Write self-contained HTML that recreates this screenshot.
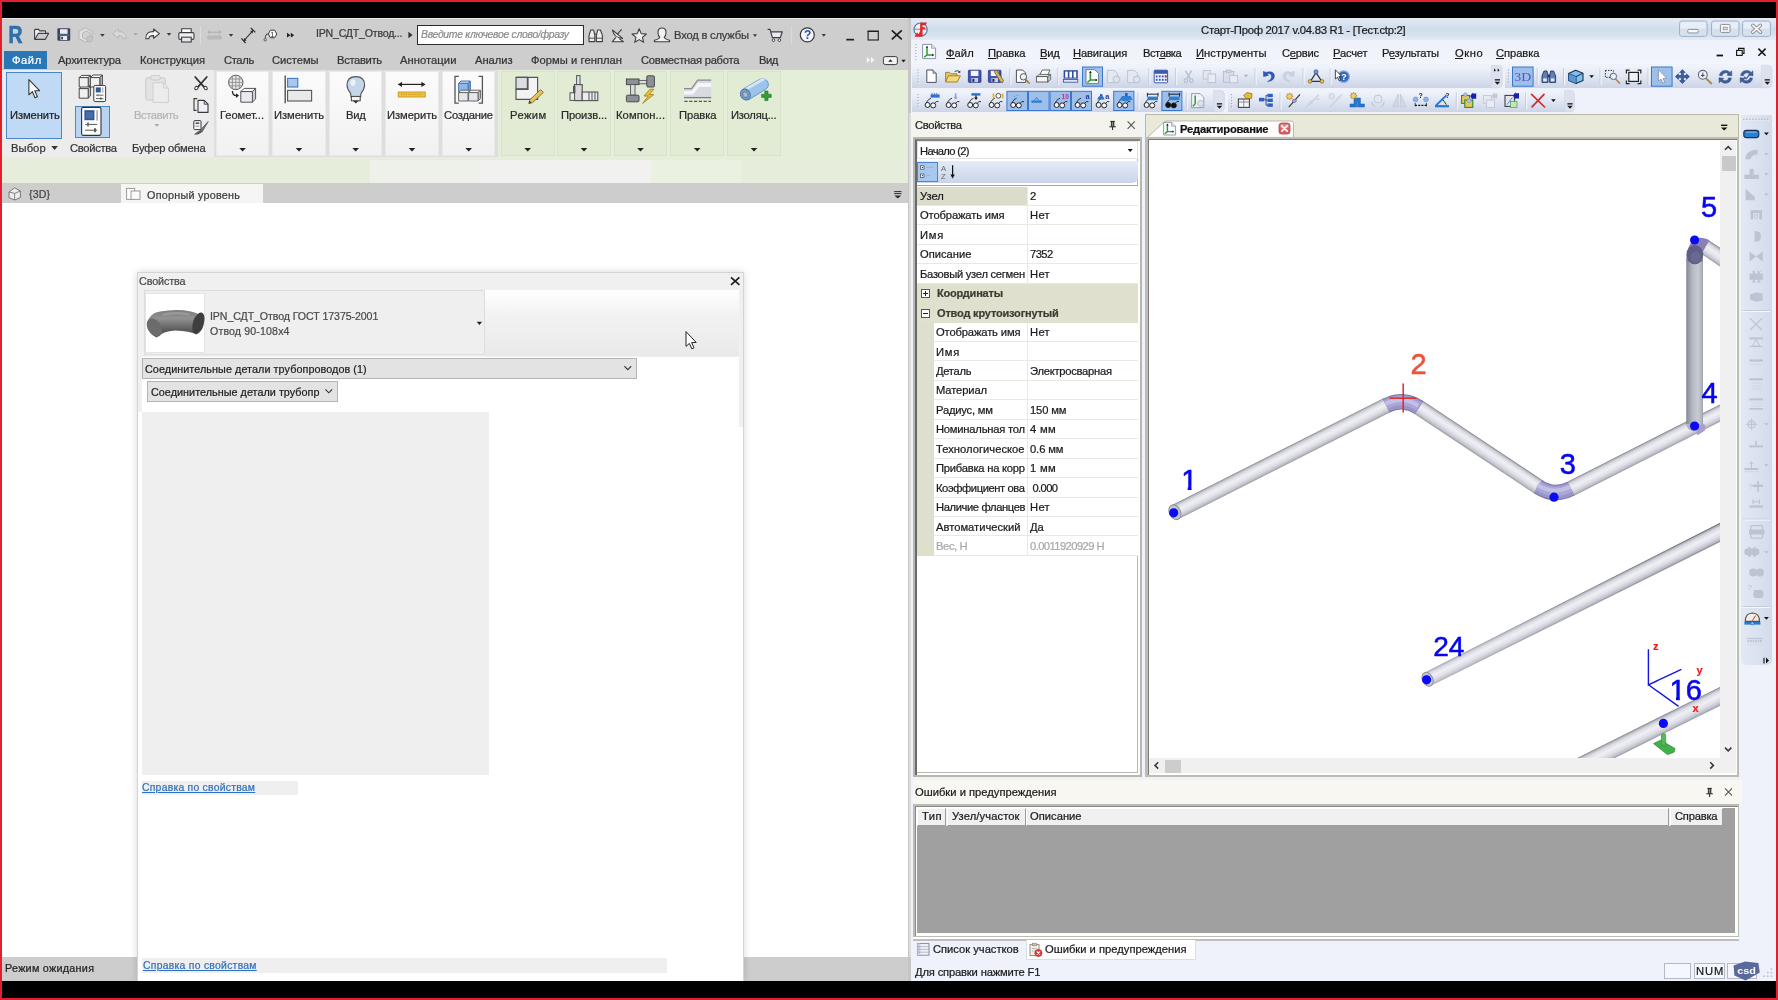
<!DOCTYPE html>
<html lang="ru"><head><meta charset="utf-8"><title>Revit / Старт-Проф</title>
<style>
html,body{margin:0;padding:0;background:#000;}
body{width:1778px;height:1000px;position:relative;overflow:hidden;font-family:"Liberation Sans", sans-serif;}
#root{position:absolute;left:0;top:0;width:1778px;height:1000px;overflow:hidden;background:#000;}
#root div,#root svg,#root span.t{position:absolute;box-sizing:border-box;}
span.t{white-space:pre;font-family:"Liberation Sans", sans-serif;-webkit-text-stroke:0.22px currentColor;will-change:transform;}
u{text-decoration:underline;text-underline-offset:1px;}
#root svg{will-change:transform;}
</style></head><body><div id="root">
<div style="left:0px;top:0px;width:1778px;height:1000px;background:#e0202f;"></div>
<div style="left:2px;top:2px;width:1774px;height:996px;background:#000;"></div>
<div style="left:2px;top:18px;width:908px;height:963px;background:#ffffff;"></div>
<div style="left:2px;top:18px;width:908px;height:52px;background:#cecece;"></div>
<div style="left:2px;top:18px;width:908px;height:1px;background:#e6e6e6;"></div>
<div style="left:2px;top:70px;width:908px;height:87px;background:#e5eed9;"></div>
<div style="left:2px;top:70px;width:212px;height:87px;background:#ececec;"></div>
<div style="left:214px;top:70px;width:284px;height:87px;background:#dedede;"></div>
<div style="left:2px;top:157px;width:908px;height:26px;background:#e6eedb;"></div>
<div style="left:370px;top:160px;width:110px;height:23px;background:#eef1ea;"></div>
<div style="left:480px;top:160px;width:171px;height:23px;background:#f1f2f0;"></div>
<div style="left:651px;top:160px;width:90px;height:23px;background:#eaf1e1;"></div>
<div style="left:2px;top:183px;width:908px;height:20px;background:#cdcdcd;"></div>
<div style="left:121px;top:184px;width:142px;height:19px;background:#f5f5f5;"></div>
<div style="left:2px;top:957px;width:908px;height:24px;background:#cdcdcd;"></div>
<div style="left:908px;top:18px;width:3px;height:963px;background:#c6c6c6;"></div>
<div style="left:909px;top:113px;width:1.5px;height:844px;background:#dcdcde;"></div>
<div style="left:910.5px;top:113px;width:2.5px;height:844px;background:#b8bac4;"></div>
<div style="left:4px;top:51px;width:43px;height:18px;background:#2a77b7;"></div>
<span class="t" style="left:11.8px;top:53.9px;font-size:11.2px;line-height:12.51px;letter-spacing:0.572px;color:#ffffff;">Файл</span>
<span class="t" style="left:57.8px;top:53.9px;font-size:11.2px;line-height:12.51px;letter-spacing:-0.181px;color:#333;">Архитектура</span>
<span class="t" style="left:139.8px;top:53.9px;font-size:11.2px;line-height:12.51px;letter-spacing:0.006px;color:#333;">Конструкция</span>
<span class="t" style="left:223.8px;top:53.9px;font-size:11.2px;line-height:12.51px;letter-spacing:-0.356px;color:#333;">Сталь</span>
<span class="t" style="left:271.8px;top:53.9px;font-size:11.2px;line-height:12.51px;letter-spacing:-0.052px;color:#333;">Системы</span>
<span class="t" style="left:336.8px;top:53.9px;font-size:11.2px;line-height:12.51px;letter-spacing:-0.323px;color:#333;">Вставить</span>
<span class="t" style="left:399.8px;top:53.9px;font-size:11.2px;line-height:12.51px;letter-spacing:0.060px;color:#333;">Аннотации</span>
<span class="t" style="left:474.8px;top:53.9px;font-size:11.2px;line-height:12.51px;letter-spacing:-0.044px;color:#333;">Анализ</span>
<span class="t" style="left:530.8px;top:53.9px;font-size:11.2px;line-height:12.51px;letter-spacing:0.045px;color:#333;">Формы и генплан</span>
<span class="t" style="left:640.8px;top:53.9px;font-size:11.2px;line-height:12.51px;letter-spacing:-0.242px;color:#333;">Совместная работа</span>
<span class="t" style="left:758.6px;top:53.9px;font-size:11.2px;line-height:12.51px;letter-spacing:-0.509px;color:#333;">Вид</span>
<span class="t" style="left:315.8px;top:28.2px;font-size:10.6px;line-height:11.84px;letter-spacing:-0.219px;color:#3a3a3a;">IPN_СДТ_Отвод...</span>
<div style="left:417px;top:25px;width:167px;height:20px;background:#ffffff;border:1.5px solid #2b2b2b;"></div>
<span class="t" style="left:420.8px;top:29.3px;font-size:10.4px;line-height:11.62px;letter-spacing:-0.294px;color:#8c8c8c;font-style:italic;">Введите ключевое слово/фразу</span>
<span class="t" style="left:673.8px;top:28.9px;font-size:11.2px;line-height:12.51px;letter-spacing:-0.198px;color:#3c3c3c;">Вход в службы</span>
<div style="left:6px;top:72px;width:56px;height:67px;background:#c0daf5;border:1px solid #4a86c8;"></div>
<span class="t" style="left:9.5px;top:108.9px;font-size:11.2px;line-height:12.51px;letter-spacing:-0.101px;color:#222;">Изменить</span>
<span class="t" style="left:11.4px;top:141.9px;font-size:11.2px;line-height:12.51px;letter-spacing:0.068px;color:#333;">Выбор</span>
<div style="left:75px;top:106px;width:35px;height:32px;background:#b9d4f2;border:1px solid #4a86c8;"></div>
<span class="t" style="left:69.7px;top:141.9px;font-size:11.2px;line-height:12.51px;letter-spacing:-0.297px;color:#333;">Свойства</span>
<span class="t" style="left:134.3px;top:108.9px;font-size:11.2px;line-height:12.51px;letter-spacing:-0.409px;color:#b4b4b4;">Вставить</span>
<span class="t" style="left:131.5px;top:141.9px;font-size:11.2px;line-height:12.51px;letter-spacing:-0.212px;color:#333;">Буфер обмена</span>
<div style="left:215.7px;top:71px;width:53.30000000000001px;height:85px;background:linear-gradient(#fbfbfb,#f1f1f1);border:1px solid #e9e9e9;"></div>
<div style="left:272px;top:71px;width:54.10000000000002px;height:85px;background:linear-gradient(#fbfbfb,#f1f1f1);border:1px solid #e9e9e9;"></div>
<div style="left:328.7px;top:71px;width:53.69999999999999px;height:85px;background:linear-gradient(#fbfbfb,#f1f1f1);border:1px solid #e9e9e9;"></div>
<div style="left:385px;top:71px;width:54.19999999999999px;height:85px;background:linear-gradient(#fbfbfb,#f1f1f1);border:1px solid #e9e9e9;"></div>
<div style="left:442px;top:71px;width:53.39999999999998px;height:85px;background:linear-gradient(#fbfbfb,#f1f1f1);border:1px solid #e9e9e9;"></div>
<div style="left:500.7px;top:71px;width:54.00000000000006px;height:85px;background:#e2ecd4;border:1px solid #d9e3cc;"></div>
<div style="left:557.4px;top:71px;width:53.200000000000045px;height:85px;background:#e2ecd4;border:1px solid #d9e3cc;"></div>
<div style="left:613.6px;top:71px;width:53.69999999999993px;height:85px;background:#e2ecd4;border:1px solid #d9e3cc;"></div>
<div style="left:670.3px;top:71px;width:53.700000000000045px;height:85px;background:#e2ecd4;border:1px solid #d9e3cc;"></div>
<div style="left:726.7px;top:71px;width:54.799999999999955px;height:85px;background:#e2ecd4;border:1px solid #d9e3cc;"></div>
<span class="t" style="left:220.3px;top:108.9px;font-size:11.2px;line-height:12.51px;letter-spacing:-0.064px;color:#2a2a2a;">Геомет...</span>
<span class="t" style="left:274.3px;top:108.9px;font-size:11.2px;line-height:12.51px;letter-spacing:-0.058px;color:#2a2a2a;">Изменить</span>
<span class="t" style="left:346.3px;top:108.9px;font-size:11.2px;line-height:12.51px;letter-spacing:-0.259px;color:#2a2a2a;">Вид</span>
<span class="t" style="left:387.3px;top:108.9px;font-size:11.2px;line-height:12.51px;letter-spacing:-0.065px;color:#2a2a2a;">Измерить</span>
<span class="t" style="left:444.3px;top:108.9px;font-size:11.2px;line-height:12.51px;letter-spacing:-0.201px;color:#2a2a2a;">Создание</span>
<span class="t" style="left:510.3px;top:108.9px;font-size:11.2px;line-height:12.51px;letter-spacing:0.433px;color:#2a2a2a;">Режим</span>
<span class="t" style="left:561.3px;top:108.9px;font-size:11.2px;line-height:12.51px;letter-spacing:-0.143px;color:#2a2a2a;">Произв...</span>
<span class="t" style="left:615.8px;top:108.9px;font-size:11.2px;line-height:12.51px;letter-spacing:0.098px;color:#2a2a2a;">Компон...</span>
<span class="t" style="left:678.8px;top:108.9px;font-size:11.2px;line-height:12.51px;letter-spacing:-0.047px;color:#2a2a2a;">Правка</span>
<span class="t" style="left:730.8px;top:108.9px;font-size:11.2px;line-height:12.51px;letter-spacing:-0.230px;color:#2a2a2a;">Изоляц...</span>
<span class="t" style="left:29.3px;top:188.7px;font-size:10.6px;line-height:11.84px;letter-spacing:0.180px;color:#444;">{3D}</span>
<span class="t" style="left:147.4px;top:188.6px;font-size:10.8px;line-height:12.06px;letter-spacing:0.235px;color:#3a3a3a;">Опорный уровень</span>
<span class="t" style="left:4.8px;top:961.6px;font-size:10.8px;line-height:12.06px;letter-spacing:0.263px;color:#222;">Режим ожидания</span>
<div style="left:134px;top:270px;width:613px;height:714px;background:radial-gradient(closest-side,rgba(0,0,0,0.10),rgba(0,0,0,0));"></div>
<div style="left:137px;top:272px;width:607px;height:709px;background:#ffffff;border:1px solid #d4d4d4;border-bottom:none;box-shadow:0 0 7px rgba(0,0,0,0.16);"></div>
<div style="left:138px;top:273px;width:605px;height:84px;background:#f0f0f0;"></div>
<div style="left:138px;top:357px;width:4px;height:55px;background:#f0f0f0;"></div>
<div style="left:739px;top:357px;width:4px;height:70px;background:#f0f0f0;"></div>
<div style="left:143.5px;top:290px;width:341.5px;height:65px;background:#efefef;border:1px solid #dddddd;"></div>
<div style="left:145px;top:293px;width:60px;height:60px;background:#ffffff;border:1px solid #e4e4e4;"></div>
<div style="left:485px;top:290px;width:254px;height:66px;background:linear-gradient(#ffffff,#f2f2f2 40%,#e9e9e9);"></div>
<span class="t" style="left:138.8px;top:275.1px;font-size:10.8px;line-height:12.06px;letter-spacing:-0.126px;color:#4a4a4a;">Свойства</span>
<span class="t" style="left:209.5px;top:310.7px;font-size:10.6px;line-height:11.84px;letter-spacing:-0.080px;color:#4a4a4a;">IPN_СДТ_Отвод ГОСТ 17375-2001</span>
<span class="t" style="left:209.5px;top:325.5px;font-size:10.6px;line-height:11.84px;letter-spacing:0.149px;color:#4a4a4a;">Отвод 90-108x4</span>
<div style="left:142px;top:357.5px;width:494.5px;height:21px;background:#e3e3e3;border:1px solid #b4b4b4;"></div>
<span class="t" style="left:145.4px;top:362.7px;font-size:10.8px;line-height:12.06px;letter-spacing:0.067px;color:#222;">Соединительные детали трубопроводов (1)</span>
<div style="left:147.3px;top:381px;width:190.5px;height:20.5px;background:#e3e3e3;border:1px solid #b4b4b4;"></div>
<span class="t" style="left:150.8px;top:385.6px;font-size:10.8px;line-height:12.06px;letter-spacing:0.035px;color:#222;">Соединительные детали трубопр</span>
<div style="left:142px;top:412px;width:347px;height:363px;background:#efefef;"></div>
<div style="left:142px;top:781px;width:156px;height:14px;background:#efefef;"></div>
<span class="t" style="left:141.8px;top:782.3px;font-size:10.4px;line-height:11.62px;letter-spacing:0.242px;color:#2f6fbf;text-decoration:underline;">Справка по свойствам</span>
<div style="left:142px;top:958px;width:525px;height:15px;background:#efefef;"></div>
<span class="t" style="left:143.3px;top:960.3px;font-size:10.4px;line-height:11.62px;letter-spacing:0.268px;color:#2f6fbf;text-decoration:underline;">Справка по свойствам</span>
<div style="left:911px;top:18px;width:865px;height:963px;background:#eff2fb;"></div>
<div style="left:911px;top:18px;width:865px;height:22px;background:linear-gradient(#e3eaf4,#d1ddeb 50%,#d6e1ee 75%,#e4ebf5);"></div>
<span class="t" style="left:1200.6px;top:24.0px;font-size:11.3px;line-height:12.62px;letter-spacing:-0.275px;color:#1a1a1a;">Старт-Проф 2017 v.04.83 R1 - [Тест.ctp:2]</span>
<div style="left:911px;top:40px;width:865px;height:24px;background:linear-gradient(#eef1fa,#f3f5fc);"></div>
<span class="t" style="left:946.3px;top:46.7px;font-size:11.2px;line-height:12.51px;letter-spacing:0.072px;color:#1a1a1a;">Файл</span><div style="left:946.3px;top:58.2px;width:8.5px;height:1px;background:#1a1a1a;"></div>
<span class="t" style="left:987.8px;top:46.7px;font-size:11.2px;line-height:12.51px;letter-spacing:-0.047px;color:#1a1a1a;">Правка</span><div style="left:987.8px;top:58.2px;width:8.0px;height:1px;background:#1a1a1a;"></div>
<span class="t" style="left:1039.8px;top:46.7px;font-size:11.2px;line-height:12.51px;letter-spacing:-0.259px;color:#1a1a1a;">Вид</span><div style="left:1039.8px;top:58.2px;width:7.5px;height:1px;background:#1a1a1a;"></div>
<span class="t" style="left:1073.3px;top:46.7px;font-size:11.2px;line-height:12.51px;letter-spacing:-0.133px;color:#1a1a1a;">Навигация</span><div style="left:1073.3px;top:58.2px;width:8.1px;height:1px;background:#1a1a1a;"></div>
<span class="t" style="left:1142.6px;top:46.7px;font-size:11.2px;line-height:12.51px;letter-spacing:-0.472px;color:#1a1a1a;">Вставка</span><div style="left:1159.3px;top:58.2px;width:6.1px;height:1px;background:#1a1a1a;"></div>
<span class="t" style="left:1195.8px;top:46.7px;font-size:11.2px;line-height:12.51px;letter-spacing:0.073px;color:#1a1a1a;">Инструменты</span><div style="left:1195.8px;top:58.2px;width:8.0px;height:1px;background:#1a1a1a;"></div>
<span class="t" style="left:1281.8px;top:46.7px;font-size:11.2px;line-height:12.51px;letter-spacing:-0.250px;color:#1a1a1a;">Сервис</span><div style="left:1289.6px;top:58.2px;width:6.2px;height:1px;background:#1a1a1a;"></div>
<span class="t" style="left:1333.3px;top:46.7px;font-size:11.2px;line-height:12.51px;letter-spacing:-0.207px;color:#1a1a1a;">Расчет</span><div style="left:1333.3px;top:58.2px;width:7.5px;height:1px;background:#1a1a1a;"></div>
<span class="t" style="left:1382.4px;top:46.7px;font-size:11.2px;line-height:12.51px;letter-spacing:-0.202px;color:#1a1a1a;">Результаты</span><div style="left:1389.6px;top:58.2px;width:5.7px;height:1px;background:#1a1a1a;"></div>
<span class="t" style="left:1454.6px;top:46.7px;font-size:11.2px;line-height:12.51px;letter-spacing:0.577px;color:#1a1a1a;">Окно</span><div style="left:1454.6px;top:58.2px;width:8.7px;height:1px;background:#1a1a1a;"></div>
<span class="t" style="left:1495.8px;top:46.7px;font-size:11.2px;line-height:12.51px;letter-spacing:-0.055px;color:#1a1a1a;">Справка</span><div style="left:1495.8px;top:58.2px;width:8.1px;height:1px;background:#1a1a1a;"></div>
<div style="left:912px;top:65px;width:589px;height:23px;background:linear-gradient(#f1f4fb,#e2e8f4 45%,#ccd4e6);border-radius:0 6px 6px 0;"></div>
<div style="left:1505px;top:65px;width:267px;height:23px;background:linear-gradient(#f1f4fb,#e2e8f4 45%,#ccd4e6);border-radius:0 6px 6px 0;"></div>
<div style="left:912px;top:90px;width:310px;height:22px;background:linear-gradient(#f1f4fb,#e2e8f4 45%,#ccd4e6);border-radius:0 6px 6px 0;"></div>
<div style="left:1228px;top:90px;width:346px;height:22px;background:linear-gradient(#f1f4fb,#e2e8f4 45%,#ccd4e6);border-radius:0 6px 6px 0;"></div>
<div style="left:911px;top:113px;width:231px;height:25px;background:#f4f3ee;"></div>
<span class="t" style="left:915.4px;top:118.8px;font-size:11.2px;line-height:12.51px;letter-spacing:-0.312px;color:#1e1e1e;">Свойства</span>
<div style="left:913px;top:137px;width:229px;height:640px;background:#b7b8ac;"></div>
<div style="left:915.2px;top:139px;width:225px;height:636px;background:#fdfdf9;border-left:2.2px solid #6a6a6a;border-top:2px solid #838380;"></div>
<div style="left:917.4px;top:141px;width:220.9px;height:632.2px;background:#ffffff;border-right:1.3px solid #b8b8b8;border-bottom:1.2px solid #b8b8b8;"></div>
<div style="left:917px;top:184.6px;width:221px;height:1.4px;background:#a6a69e;"></div>
<div style="left:917px;top:141px;width:221px;height:18px;background:#ffffff;border:1px solid #e2e2e2;"></div>
<span class="t" style="left:920.3px;top:144.6px;font-size:11.2px;line-height:12.51px;letter-spacing:-0.700px;color:#1a1a1a;">Начало (2)</span>
<div style="left:917px;top:161px;width:221px;height:22px;background:linear-gradient(#e4ebf7,#c9d5ea);border-radius:0 0 6px 0;"></div>
<div style="left:917px;top:162px;width:21px;height:20px;background:#a9c8ee;border:1px solid #4a86d4;"></div>
<div style="left:917px;top:186px;width:221px;height:370px;background:#ffffff;"></div>
<div style="left:917px;top:186.5px;width:110px;height:19.444px;background:#dcdcca;"></div>
<span class="t" style="left:919.7px;top:190.0px;font-size:11.2px;line-height:12.51px;letter-spacing:-0.014px;color:#1a1a1a;max-width:106px;overflow:hidden;">Узел</span>
<span class="t" style="left:1029.8px;top:190.0px;font-size:11.2px;line-height:12.51px;letter-spacing:0.000px;color:#1a1a1a;">2</span>
<div style="left:917px;top:204.944px;width:221px;height:1px;background:#e9e9e2;"></div>
<div style="left:1027px;top:186.5px;width:1px;height:19.444px;background:#e9e9e2;"></div>
<span class="t" style="left:919.7px;top:209.4px;font-size:11.2px;line-height:12.51px;letter-spacing:-0.131px;color:#1a1a1a;max-width:106px;overflow:hidden;">Отображать имя</span>
<span class="t" style="left:1029.8px;top:209.4px;font-size:11.2px;line-height:12.51px;letter-spacing:0.335px;color:#1a1a1a;">Нет</span>
<div style="left:917px;top:224.38799999999998px;width:221px;height:1px;background:#e9e9e2;"></div>
<div style="left:1027px;top:205.944px;width:1px;height:19.444px;background:#e9e9e2;"></div>
<span class="t" style="left:919.7px;top:228.9px;font-size:11.2px;line-height:12.51px;letter-spacing:0.768px;color:#1a1a1a;max-width:106px;overflow:hidden;">Имя</span>
<div style="left:917px;top:243.832px;width:221px;height:1px;background:#e9e9e2;"></div>
<div style="left:1027px;top:225.388px;width:1px;height:19.444px;background:#e9e9e2;"></div>
<span class="t" style="left:919.7px;top:248.3px;font-size:11.2px;line-height:12.51px;letter-spacing:-0.018px;color:#1a1a1a;max-width:106px;overflow:hidden;">Описание</span>
<span class="t" style="left:1029.8px;top:248.3px;font-size:11.2px;line-height:12.51px;letter-spacing:-0.553px;color:#1a1a1a;">7352</span>
<div style="left:917px;top:263.276px;width:221px;height:1px;background:#e9e9e2;"></div>
<div style="left:1027px;top:244.832px;width:1px;height:19.444px;background:#e9e9e2;"></div>
<span class="t" style="left:919.7px;top:267.7px;font-size:11.2px;line-height:12.51px;letter-spacing:-0.277px;color:#1a1a1a;max-width:106px;overflow:hidden;">Базовый узел сегмен</span>
<span class="t" style="left:1029.8px;top:267.7px;font-size:11.2px;line-height:12.51px;letter-spacing:0.335px;color:#1a1a1a;">Нет</span>
<div style="left:917px;top:282.72px;width:221px;height:1px;background:#e9e9e2;"></div>
<div style="left:1027px;top:264.276px;width:1px;height:19.444px;background:#e9e9e2;"></div>
<div style="left:917px;top:283.72px;width:221px;height:19.444px;background:#e0e0cf;"></div>
<span class="t" style="left:936.5px;top:287.3px;font-size:11.0px;line-height:12.29px;letter-spacing:-0.199px;color:#3c3c32;font-weight:700;">Координаты</span>
<div style="left:921px;top:289.22px;width:9px;height:9px;background:#ffffff;border:1px solid #555;"></div>
<div style="left:923px;top:293.22px;width:5px;height:1px;background:#222;"></div>
<div style="left:925px;top:291.22px;width:1px;height:5px;background:#222;"></div>
<div style="left:917px;top:303.164px;width:221px;height:19.444px;background:#e0e0cf;"></div>
<span class="t" style="left:936.5px;top:306.7px;font-size:11.0px;line-height:12.29px;letter-spacing:-0.177px;color:#3c3c32;font-weight:700;">Отвод крутоизогнутый</span>
<div style="left:921px;top:308.664px;width:9px;height:9px;background:#ffffff;border:1px solid #555;"></div>
<div style="left:923px;top:312.664px;width:5px;height:1px;background:#222;"></div>
<div style="left:917px;top:322.608px;width:17px;height:19.444px;background:#dfdfce;"></div>
<span class="t" style="left:936.3px;top:326.1px;font-size:11.2px;line-height:12.51px;letter-spacing:-0.138px;color:#1a1a1a;max-width:89px;overflow:hidden;">Отображать имя</span>
<span class="t" style="left:1029.8px;top:326.1px;font-size:11.2px;line-height:12.51px;letter-spacing:0.335px;color:#1a1a1a;">Нет</span>
<div style="left:934px;top:341.052px;width:204px;height:1px;background:#e9e9e2;"></div>
<div style="left:1027px;top:322.608px;width:1px;height:19.444px;background:#e9e9e2;"></div>
<div style="left:917px;top:342.052px;width:17px;height:19.444px;background:#dfdfce;"></div>
<span class="t" style="left:936.3px;top:345.5px;font-size:11.2px;line-height:12.51px;letter-spacing:0.718px;color:#1a1a1a;max-width:89px;overflow:hidden;">Имя</span>
<div style="left:934px;top:360.49600000000004px;width:204px;height:1px;background:#e9e9e2;"></div>
<div style="left:1027px;top:342.052px;width:1px;height:19.444px;background:#e9e9e2;"></div>
<div style="left:917px;top:361.496px;width:17px;height:19.444px;background:#dfdfce;"></div>
<span class="t" style="left:936.3px;top:365.0px;font-size:11.2px;line-height:12.51px;letter-spacing:-0.291px;color:#1a1a1a;max-width:89px;overflow:hidden;">Деталь</span>
<span class="t" style="left:1029.8px;top:365.0px;font-size:11.2px;line-height:12.51px;letter-spacing:-0.256px;color:#1a1a1a;">Электросварная</span>
<div style="left:934px;top:379.94px;width:204px;height:1px;background:#e9e9e2;"></div>
<div style="left:1027px;top:361.496px;width:1px;height:19.444px;background:#e9e9e2;"></div>
<div style="left:917px;top:380.94px;width:17px;height:19.444px;background:#dfdfce;"></div>
<span class="t" style="left:936.3px;top:384.4px;font-size:11.2px;line-height:12.51px;letter-spacing:-0.116px;color:#1a1a1a;max-width:89px;overflow:hidden;">Материал</span>
<div style="left:934px;top:399.384px;width:204px;height:1px;background:#e9e9e2;"></div>
<div style="left:1027px;top:380.94px;width:1px;height:19.444px;background:#e9e9e2;"></div>
<div style="left:917px;top:400.384px;width:17px;height:19.444px;background:#dfdfce;"></div>
<span class="t" style="left:936.3px;top:403.9px;font-size:11.2px;line-height:12.51px;letter-spacing:-0.196px;color:#1a1a1a;max-width:89px;overflow:hidden;">Радиус, мм</span>
<span class="t" style="left:1029.8px;top:403.9px;font-size:11.2px;line-height:12.51px;letter-spacing:-0.122px;color:#1a1a1a;">150 мм</span>
<div style="left:934px;top:418.82800000000003px;width:204px;height:1px;background:#e9e9e2;"></div>
<div style="left:1027px;top:400.384px;width:1px;height:19.444px;background:#e9e9e2;"></div>
<div style="left:917px;top:419.828px;width:17px;height:19.444px;background:#dfdfce;"></div>
<span class="t" style="left:936.3px;top:423.3px;font-size:11.2px;line-height:12.51px;letter-spacing:-0.220px;color:#1a1a1a;max-width:89px;overflow:hidden;">Номинальная тол</span>
<span class="t" style="left:1029.8px;top:423.3px;font-size:11.2px;line-height:12.51px;letter-spacing:0.338px;color:#1a1a1a;">4 мм</span>
<div style="left:934px;top:438.272px;width:204px;height:1px;background:#e9e9e2;"></div>
<div style="left:1027px;top:419.828px;width:1px;height:19.444px;background:#e9e9e2;"></div>
<div style="left:917px;top:439.272px;width:17px;height:19.444px;background:#dfdfce;"></div>
<span class="t" style="left:936.3px;top:442.7px;font-size:11.2px;line-height:12.51px;letter-spacing:0.018px;color:#1a1a1a;max-width:89px;overflow:hidden;">Технологическое</span>
<span class="t" style="left:1029.8px;top:442.7px;font-size:11.2px;line-height:12.51px;letter-spacing:-0.097px;color:#1a1a1a;">0.6 мм</span>
<div style="left:934px;top:457.716px;width:204px;height:1px;background:#e9e9e2;"></div>
<div style="left:1027px;top:439.272px;width:1px;height:19.444px;background:#e9e9e2;"></div>
<div style="left:917px;top:458.716px;width:17px;height:19.444px;background:#dfdfce;"></div>
<span class="t" style="left:936.3px;top:462.2px;font-size:11.2px;line-height:12.51px;letter-spacing:-0.233px;color:#1a1a1a;max-width:89px;overflow:hidden;">Прибавка на корр</span>
<span class="t" style="left:1029.8px;top:462.2px;font-size:11.2px;line-height:12.51px;letter-spacing:0.338px;color:#1a1a1a;">1 мм</span>
<div style="left:934px;top:477.16px;width:204px;height:1px;background:#e9e9e2;"></div>
<div style="left:1027px;top:458.716px;width:1px;height:19.444px;background:#e9e9e2;"></div>
<div style="left:917px;top:478.15999999999997px;width:17px;height:19.444px;background:#dfdfce;"></div>
<span class="t" style="left:936.3px;top:481.6px;font-size:11.2px;line-height:12.51px;letter-spacing:-0.405px;color:#1a1a1a;max-width:89px;overflow:hidden;">Коэффициент ова</span>
<span class="t" style="left:1029.8px;top:481.6px;font-size:11.2px;line-height:12.51px;letter-spacing:-0.610px;color:#1a1a1a;"> 0.000</span>
<div style="left:934px;top:496.604px;width:204px;height:1px;background:#e9e9e2;"></div>
<div style="left:1027px;top:478.15999999999997px;width:1px;height:19.444px;background:#e9e9e2;"></div>
<div style="left:917px;top:497.604px;width:17px;height:19.444px;background:#dfdfce;"></div>
<span class="t" style="left:936.3px;top:501.1px;font-size:11.2px;line-height:12.51px;letter-spacing:-0.381px;color:#1a1a1a;max-width:89px;overflow:hidden;">Наличие фланцев</span>
<span class="t" style="left:1029.8px;top:501.1px;font-size:11.2px;line-height:12.51px;letter-spacing:0.335px;color:#1a1a1a;">Нет</span>
<div style="left:934px;top:516.048px;width:204px;height:1px;background:#e9e9e2;"></div>
<div style="left:1027px;top:497.604px;width:1px;height:19.444px;background:#e9e9e2;"></div>
<div style="left:917px;top:517.048px;width:17px;height:19.444px;background:#dfdfce;"></div>
<span class="t" style="left:936.3px;top:520.5px;font-size:11.2px;line-height:12.51px;letter-spacing:0.002px;color:#1a1a1a;max-width:89px;overflow:hidden;">Автоматический</span>
<span class="t" style="left:1029.8px;top:520.5px;font-size:11.2px;line-height:12.51px;letter-spacing:-0.081px;color:#1a1a1a;">Да</span>
<div style="left:934px;top:535.492px;width:204px;height:1px;background:#e9e9e2;"></div>
<div style="left:1027px;top:517.048px;width:1px;height:19.444px;background:#e9e9e2;"></div>
<div style="left:917px;top:536.492px;width:17px;height:19.444px;background:#dfdfce;"></div>
<span class="t" style="left:936.3px;top:540.0px;font-size:11.2px;line-height:12.51px;letter-spacing:-0.404px;color:#a8a8a8;max-width:89px;overflow:hidden;">Вес, Н</span>
<span class="t" style="left:1029.8px;top:540.0px;font-size:11.2px;line-height:12.51px;letter-spacing:-0.570px;color:#a8a8a8;">0.0011920929 Н</span>
<div style="left:934px;top:554.9359999999999px;width:204px;height:1px;background:#e9e9e2;"></div>
<div style="left:1027px;top:536.492px;width:1px;height:19.444px;background:#e9e9e2;"></div>
<div style="left:1145px;top:114px;width:594px;height:663px;background:#e9e9da;border:1px solid #b9b9a8;"></div>
<div style="left:1145px;top:137px;width:594px;height:640px;background:#bdbdb8;"></div>
<div style="left:1147.6px;top:139px;width:589.9px;height:636.2px;background:#fdfdf9;border-left:1.4px solid #7c7c78;border-top:1.6px solid #7c7c78;"></div>
<svg style="left:1146px;top:114px" width="160" height="26" viewBox="0 0 160 26"><path d="M1.5 23.4 L17.5 8.5 Q19 7 21 7 L145 7 Q147.5 7 147.5 9.5 L147.5 23.4 Z" fill="#ffffff" stroke="#b9b9a8" stroke-width="1"/></svg>
<span class="t" style="left:1179.6px;top:122.5px;font-size:11.2px;line-height:12.51px;letter-spacing:-0.198px;color:#111;font-weight:700;">Редактирование</span>
<div style="left:1149px;top:140.6px;width:587px;height:632.6px;background:#ffffff;"></div>
<div style="left:1720.4px;top:140.6px;width:15.6px;height:617.4px;background:#f0f0f0;"></div>
<div style="left:1722px;top:156px;width:14px;height:15px;background:#c9c9c9;"></div>
<div style="left:1149px;top:758px;width:571.4px;height:15.2px;background:#f0f0f0;"></div>
<div style="left:1164.5px;top:759.5px;width:16px;height:13px;background:#cdcdcd;"></div>
<div style="left:1720.4px;top:758px;width:15.6px;height:15.2px;background:#f0f0f0;"></div>
<div style="left:1741px;top:115px;width:31px;height:550px;background:linear-gradient(90deg,#e3e8f4,#d3dbeb);border-radius:0 0 5px 5px;"></div>
<div style="left:913px;top:780px;width:829px;height:24.5px;background:#f8f7f2;"></div>
<span class="t" style="left:914.7px;top:785.6px;font-size:11.2px;line-height:12.51px;letter-spacing:0.008px;color:#1a1a1a;">Ошибки и предупреждения</span>
<div style="left:912.8px;top:803.7px;width:826.2px;height:133.3px;background:#bcbdb2;"></div>
<div style="left:915px;top:806px;width:822.8px;height:129.6px;background:#fdfdf9;border-left:1.6px solid #8a8a86;border-top:1.6px solid #8a8a86;"></div>
<div style="left:916.6px;top:807.6px;width:818.6px;height:125.3px;background:#a0a0a0;"></div>
<div style="left:916.6px;top:807.6px;width:806.4px;height:18.6px;background:#f0f0f0;"></div>
<div style="left:916.6px;top:807.6px;width:29.399999999999977px;height:18.6px;background:#f0f0f0;border:1px solid #fff;border-right-color:#9c9c9c;border-bottom-color:#9c9c9c;"></div>
<div style="left:947px;top:807.6px;width:78.5px;height:18.6px;background:#f0f0f0;border:1px solid #fff;border-right-color:#9c9c9c;border-bottom-color:#9c9c9c;"></div>
<div style="left:1026px;top:807.6px;width:643.3px;height:18.6px;background:#f0f0f0;border:1px solid #fff;border-right-color:#9c9c9c;border-bottom-color:#9c9c9c;"></div>
<div style="left:1670px;top:807.6px;width:53px;height:18.6px;background:#f0f0f0;border:1px solid #fff;border-right-color:#9c9c9c;border-bottom-color:#9c9c9c;"></div>
<div style="left:913px;top:937px;width:826px;height:2.4px;background:#ffffff;"></div>
<div style="left:913px;top:939.4px;width:826px;height:1.6px;background:#bebebe;"></div>
<span class="t" style="left:921.6px;top:809.5px;font-size:11.2px;line-height:12.51px;letter-spacing:0.488px;color:#1a1a1a;">Тип</span>
<span class="t" style="left:951.8px;top:809.5px;font-size:11.2px;line-height:12.51px;letter-spacing:0.107px;color:#1a1a1a;">Узел/участок</span>
<span class="t" style="left:1029.8px;top:809.5px;font-size:11.2px;line-height:12.51px;letter-spacing:0.011px;color:#1a1a1a;">Описание</span>
<span class="t" style="left:1674.8px;top:809.5px;font-size:11.2px;line-height:12.51px;letter-spacing:-0.222px;color:#1a1a1a;">Справка</span>
<div style="left:1025.8px;top:940px;width:170px;height:19.5px;background:#ffffff;border:1px solid #d8dde8;border-top:none;"></div>
<span class="t" style="left:932.5px;top:943.3px;font-size:11.2px;line-height:12.51px;letter-spacing:-0.014px;color:#1a1a1a;">Список участков</span>
<span class="t" style="left:1044.7px;top:943.3px;font-size:11.2px;line-height:12.51px;letter-spacing:0.004px;color:#1a1a1a;">Ошибки и предупреждения</span>
<span class="t" style="left:914.8px;top:965.5px;font-size:11.2px;line-height:12.51px;letter-spacing:-0.161px;color:#1a1a1a;">Для справки нажмите F1</span>
<div style="left:1664px;top:963px;width:27px;height:16px;background:#f4f7fd;border:1px solid #b5b9c4;"></div>
<div style="left:1693.5px;top:963px;width:31px;height:16px;background:#f4f7fd;border:1px solid #b5b9c4;"></div>
<div style="left:1727px;top:963px;width:30px;height:16px;background:#f4f7fd;border:1px solid #b5b9c4;"></div>
<span class="t" style="left:1695.8px;top:965.4px;font-size:11.2px;line-height:12.51px;letter-spacing:0.874px;color:#1a1a1a;">NUM</span>
<svg style="left:1149px;top:140px" width="571" height="618" viewBox="1149 140 571 618"><defs><linearGradient id="pg0" gradientUnits="userSpaceOnUse" x1="1276.92" y1="452.04" x2="1283.91" y2="465.87"><stop offset="0" stop-color="#74747a"/><stop offset="0.07" stop-color="#b2b3bc"/><stop offset="0.2" stop-color="#d9dae2"/><stop offset="0.42" stop-color="#eff0f5"/><stop offset="0.64" stop-color="#e2e3ea"/><stop offset="0.85" stop-color="#c5c6d0"/><stop offset="0.95" stop-color="#abacb5"/><stop offset="1" stop-color="#8e8e95"/></linearGradient><linearGradient id="pg1" gradientUnits="userSpaceOnUse" x1="1482.89" y1="440.65" x2="1474.31" y2="453.55"><stop offset="0" stop-color="#74747a"/><stop offset="0.07" stop-color="#b2b3bc"/><stop offset="0.2" stop-color="#d9dae2"/><stop offset="0.42" stop-color="#eff0f5"/><stop offset="0.64" stop-color="#e2e3ea"/><stop offset="0.85" stop-color="#c5c6d0"/><stop offset="0.95" stop-color="#abacb5"/><stop offset="1" stop-color="#8e8e95"/></linearGradient><linearGradient id="pg2" gradientUnits="userSpaceOnUse" x1="1646.53" y1="441.66" x2="1653.53" y2="455.49"><stop offset="0" stop-color="#74747a"/><stop offset="0.07" stop-color="#b2b3bc"/><stop offset="0.2" stop-color="#d9dae2"/><stop offset="0.42" stop-color="#eff0f5"/><stop offset="0.64" stop-color="#e2e3ea"/><stop offset="0.85" stop-color="#c5c6d0"/><stop offset="0.95" stop-color="#abacb5"/><stop offset="1" stop-color="#8e8e95"/></linearGradient><linearGradient id="pg4" gradientUnits="userSpaceOnUse" x1="1720.78" y1="248.34" x2="1712.10" y2="261.19"><stop offset="0" stop-color="#74747a"/><stop offset="0.07" stop-color="#b2b3bc"/><stop offset="0.2" stop-color="#d9dae2"/><stop offset="0.42" stop-color="#eff0f5"/><stop offset="0.64" stop-color="#e2e3ea"/><stop offset="0.85" stop-color="#c5c6d0"/><stop offset="0.95" stop-color="#abacb5"/><stop offset="1" stop-color="#8e8e95"/></linearGradient><linearGradient id="pg3" gradientUnits="userSpaceOnUse" x1="1686.30" y1="341.25" x2="1702.90" y2="341.25"><stop offset="0" stop-color="#7e808c"/><stop offset="0.08" stop-color="#8f919d"/><stop offset="0.35" stop-color="#b4b6c1"/><stop offset="0.7" stop-color="#c9cbd4"/><stop offset="0.9" stop-color="#b4b6c0"/><stop offset="1" stop-color="#94969f"/></linearGradient><linearGradient id="pg24" gradientUnits="userSpaceOnUse" x1="1574.71" y1="596.44" x2="1581.89" y2="610.73"><stop offset="0" stop-color="#74747a"/><stop offset="0.07" stop-color="#b2b3bc"/><stop offset="0.2" stop-color="#d9dae2"/><stop offset="0.42" stop-color="#eff0f5"/><stop offset="0.64" stop-color="#e2e3ea"/><stop offset="0.85" stop-color="#c5c6d0"/><stop offset="0.95" stop-color="#abacb5"/><stop offset="1" stop-color="#8e8e95"/></linearGradient><linearGradient id="pg16" gradientUnits="userSpaceOnUse" x1="1641.26" y1="726.14" x2="1648.74" y2="741.18"><stop offset="0" stop-color="#74747a"/><stop offset="0.07" stop-color="#b2b3bc"/><stop offset="0.2" stop-color="#d9dae2"/><stop offset="0.42" stop-color="#eff0f5"/><stop offset="0.64" stop-color="#e2e3ea"/><stop offset="0.85" stop-color="#c5c6d0"/><stop offset="0.95" stop-color="#abacb5"/><stop offset="1" stop-color="#8e8e95"/></linearGradient><clipPath id="c1_0"><rect x="1178.2" y="460.6" width="63.800000000000004" height="25.70"/><rect x="1187.70" y="486.10" width="3.80" height="4.00"/></clipPath><clipPath id="c1_1"><rect x="1666.5" y="671.2" width="63.800000000000004" height="25.70"/><rect x="1676.00" y="696.70" width="3.80" height="4.00"/><rect x="1685.10" y="696.60" width="46.40" height="6.00"/></clipPath></defs><polygon points="1170.21,505.88 1383.64,398.19 1390.62,412.03 1177.19,519.72" fill="url(#pg0)"/><polygon points="1422.48,400.51 1543.30,480.78 1534.72,493.69 1413.90,413.42" fill="url(#pg1)"/><polygon points="1566.56,482.15 1726.50,401.17 1733.50,415.00 1573.56,495.98" fill="url(#pg2)"/><polygon points="1707.22,239.18 1734.34,257.51 1725.66,270.35 1698.54,252.02" fill="url(#pg4)"/><polygon points="1686.30,424.50 1686.30,258.00 1702.90,258.00 1702.90,424.50" fill="url(#pg3)"/><path d="M1386.24,405.56 Q1403.20,397.00 1419.03,407.52" fill="none" stroke="#7a76a4" stroke-width="15.5" transform="translate(0,0)"/><path d="M1386.24,405.56 Q1403.20,397.00 1419.03,407.52" fill="none" stroke="#9995c8" stroke-width="13.5" transform="translate(0,0)"/><path d="M1386.24,405.56 Q1403.20,397.00 1419.03,407.52" fill="none" stroke="#aaa6d8" stroke-width="9.0" transform="translate(-0.4,-0.9)"/><path d="M1386.24,405.56 Q1403.20,397.00 1419.03,407.52" fill="none" stroke="#c2c0e6" stroke-width="4.0" transform="translate(-0.8,-1.8)"/><path d="M1538.17,486.68 Q1554.00,497.20 1570.95,488.62" fill="none" stroke="#7a76a4" stroke-width="15.5" transform="translate(0,0)"/><path d="M1538.17,486.68 Q1554.00,497.20 1570.95,488.62" fill="none" stroke="#9995c8" stroke-width="13.5" transform="translate(0,0)"/><path d="M1538.17,486.68 Q1554.00,497.20 1570.95,488.62" fill="none" stroke="#aaa6d8" stroke-width="9.0" transform="translate(-0.4,-0.9)"/><path d="M1538.17,486.68 Q1554.00,497.20 1570.95,488.62" fill="none" stroke="#c2c0e6" stroke-width="4.0" transform="translate(-0.8,-1.8)"/><path d="M1694.60,262.00 Q1694.60,241.00 1705.37,247.28" fill="none" stroke="#8a80b4" stroke-width="16.1"/><ellipse cx="1694.8" cy="254.6" rx="8.4" ry="9.6" fill="#5f5e86"/><ellipse cx="1695.6" cy="257.0" rx="5" ry="5.6" fill="#6a6992"/><path d="M1686.3,424.0 Q1686.3,429.4 1693.6,431.6 Q1700.6,429.6 1702.8999999999999,424.0 Z" fill="#b0b2bd"/><path d="M1696.1,432.4 L1702.0,423.2 L1705.1999999999998,425.0 L1705.0,430.4 L1697.6,435.2 Z" fill="#a79fca"/><ellipse cx="1174.9" cy="512.1999999999999" rx="5.6" ry="7.75" transform="rotate(-27.2 1174.9 512.1999999999999)" fill="#c3c4cd" stroke="#8a8a92" stroke-width="0.9"/><polygon points="1423.32,673.28 1726.09,519.60 1733.91,535.15 1429.88,686.32" fill="url(#pg24)"/><ellipse cx="1427.6" cy="679.3" rx="5.2" ry="7.3" transform="rotate(-26.7 1427.6 679.3)" fill="#c3c4cd" stroke="#8a8a92" stroke-width="0.9"/><polygon points="1556.26,768.47 1726.26,683.81 1733.74,698.85 1563.74,783.51" fill="url(#pg16)"/><path d="M1653.6,743.6 L1660.6,740.2 L1675,748.6 L1674,752.2 L1667.4,754.6 Z" fill="#43b14b" stroke="#2f8f38" stroke-width="0.8" stroke-linejoin="round"/><path d="M1661.6,734.4 Q1663.6,732.4 1665.6,734.4 L1665.8,746 L1661.4,745.4 Z" fill="#56ba5d" stroke="#2f8f38" stroke-width="0.7"/><path d="M1648.4,649.3 L1648.4,684.8 L1681.4,669.4 M1648.4,684.8 L1678.6,706.4" stroke="#1414e6" stroke-width="1.4" fill="none"/><path d="M1389.5,398.2 L1416.5,398.2" stroke="#e03030" stroke-width="1.6"/><path d="M1403.2,383.5 L1403.2,412.5" stroke="#ee2222" stroke-width="1.5"/><circle cx="1173.7" cy="512.8" r="4.6" fill="#0a0af4"/><circle cx="1554.0" cy="497.2" r="4.6" fill="#0a0af4"/><circle cx="1694.6" cy="426.0" r="4.6" fill="#0a0af4"/><circle cx="1694.6" cy="240.0" r="4.6" fill="#0a0af4"/><circle cx="1426.6" cy="679.8" r="4.6" fill="#0a0af4"/><circle cx="1663.4" cy="723.4" r="4.6" fill="#0a0af4"/><text x="1181.2" y="489.6" font-family="Liberation Sans, sans-serif" font-size="29" font-weight="400" fill="#0505f0" stroke="#0505f0" stroke-width="0.55" clip-path="url(#c1_0)">1</text><text x="1410.6" y="374.0" font-family="Liberation Sans, sans-serif" font-size="29" font-weight="400" fill="#f0503c" stroke="#f0503c" stroke-width="0.55">2</text><text x="1559.7" y="473.8" font-family="Liberation Sans, sans-serif" font-size="29" font-weight="400" fill="#0505f0" stroke="#0505f0" stroke-width="0.55">3</text><text x="1701.6" y="403.0" font-family="Liberation Sans, sans-serif" font-size="29" font-weight="400" fill="#0505f0" stroke="#0505f0" stroke-width="0.55">4</text><text x="1701.0" y="217.0" font-family="Liberation Sans, sans-serif" font-size="29" font-weight="400" fill="#0505f0" stroke="#0505f0" stroke-width="0.55">5</text><text x="1433.3" y="656.3" font-family="Liberation Sans, sans-serif" font-size="28" font-weight="400" fill="#0505f0" stroke="#0505f0" stroke-width="0.55">24</text><text x="1669.5" y="700.2" font-family="Liberation Sans, sans-serif" font-size="29" font-weight="400" fill="#0505f0" stroke="#0505f0" stroke-width="0.55" clip-path="url(#c1_1)">16</text><text x="1653" y="649.6" font-family="Liberation Sans, sans-serif" font-size="11" font-weight="700" fill="#ee1c1c" stroke="#ee1c1c" stroke-width="0.2">z</text><text x="1696.6" y="674" font-family="Liberation Sans, sans-serif" font-size="11" font-weight="700" fill="#ee1c1c" stroke="#ee1c1c" stroke-width="0.2">y</text><text x="1692.4" y="711.6" font-family="Liberation Sans, sans-serif" font-size="11" font-weight="700" fill="#ee1c1c" stroke="#ee1c1c" stroke-width="0.2">x</text></svg>
<svg style="left:0;top:0" width="912" height="210" viewBox="0 0 912 210"><text x="8.6" y="43.2" font-family="Liberation Sans, sans-serif" font-size="23.5" font-weight="700" fill="#2e6fae" stroke="#2e6fae" stroke-width="0.7" textLength="14" lengthAdjust="spacingAndGlyphs">R</text><path d="M34.6,39.2 L34.6,30.2 Q34.6,29.4 35.4,29.4 L38.6,29.4 L39.8,30.9 L44.8,30.9 Q45.6,30.9 45.6,31.7 L45.6,33.2" fill="#f4f4f4" stroke="#3f3f3f" stroke-width="1.1"/><path d="M34.8,39.4 L38.2,33.4 L48.6,33.4 L45.2,39.4 Z" fill="#c9ccd4" stroke="#3f3f3f" stroke-width="1.1" stroke-linejoin="round"/><rect x="57.4" y="28.2" width="12.8" height="12.6" rx="1.2" fill="#3b4252"/><rect x="60" y="29.2" width="7.6" height="4.6" fill="#e8ecf6"/><rect x="60.4" y="36" width="6.8" height="4" fill="#e9e9ee"/><rect x="61.2" y="36.8" width="1.8" height="2.6" fill="#3b4252"/><rect x="58.4" y="34.4" width="10.8" height="1.2" fill="#5a77a8"/><path d="M79,31.5 L85.5,27.8 L92,31.5 L92,38.5 L85.5,42.2 L79,38.5 Z" fill="#e2e2e2" stroke="#b4b4b4" stroke-width="1"/><path d="M82.5,33 L86.5,30.8 L90.2,33 L90.2,37.6 L86.5,39.8 L82.5,37.6 Z" fill="#d2d2d2" stroke="#adadad" stroke-width="0.8"/><circle cx="89.5" cy="39" r="3" fill="#c4c4c4" stroke="#b0b0b0" stroke-width="0.6"/><path d="M100.10000000000001,34.0 L104.7,34.0 L102.4,36.8 Z" fill="#3a3a3a"/><path d="M112.6,33.6 L118.4,29 L118.4,31.6 Q126.2,31.2 126.2,38.6 L123.2,38.6 Q123.2,35.4 118.4,35.6 L118.4,38.2 Z" fill="#d9d9d9" stroke="#b7b7b7" stroke-width="1" stroke-linejoin="round"/><path d="M133.29999999999998,33.0 L137.9,33.0 L135.6,35.8 Z" fill="#a8a8a8"/><path d="M159.4,33.6 L153.6,29 L153.6,31.6 Q145.8,31.2 145.8,38.8 L148.8,38.8 Q148.8,35.4 153.6,35.6 L153.6,38.2 Z" fill="#f6f6f6" stroke="#3f3f3f" stroke-width="1.1" stroke-linejoin="round"/><path d="M166.7,33.0 L171.3,33.0 L169,35.8 Z" fill="#3a3a3a"/><path d="M181.6,33 L181.6,28.8 L191.2,28.8 L191.2,33" fill="#ffffff" stroke="#3f3f3f" stroke-width="1.1"/><rect x="178.8" y="32.6" width="15.2" height="6.8" rx="1.4" fill="#f0f0f2" stroke="#3f3f3f" stroke-width="1.1"/><rect x="181.6" y="37.2" width="9.6" height="4.8" fill="#e6e8f0" stroke="#3f3f3f" stroke-width="1.1"/><rect x="200" y="26" width="1" height="18" fill="#dcdcdc"/><path d="M208,32.2 L221,32.2 M208,32.2 l2.4,-1.8 M208,32.2 l2.4,1.8 M221,32.2 l-2.4,-1.8 M221,32.2 l-2.4,1.8" stroke="#adadad" stroke-width="1" fill="none"/><rect x="207.6" y="36" width="13.8" height="3" rx="1.2" fill="#bcbcbc" stroke="#adadad" stroke-width="0.6"/><path d="M228.7,34.0 L233.3,34.0 L231,36.8 Z" fill="#3a3a3a"/><path d="M243.6,41 L253.2,30.4" stroke="#2c2c2c" stroke-width="1.1"/><path d="M241.4,38.4 L245.6,43 M250.8,28 L255.4,32.4" stroke="#2c2c2c" stroke-width="1.2"/><path d="M243.6,41 l0.6,-3 l2.4,2.4 Z M253.2,30.4 l-3,0.6 l2.4,2.4 Z" fill="#2c2c2c"/><path d="M268.4,34 L270.4,30.2 L274.6,30.2 L276.8,34 L274.6,37.8 L270.4,37.8 Z" fill="#fbfbfb" stroke="#3a3a3a" stroke-width="1"/><text x="270.6" y="36.6" font-family="Liberation Sans, sans-serif" font-size="6.6" fill="#222">1</text><path d="M268.4,34 Q265.2,33.6 265.2,38.6" fill="none" stroke="#3a3a3a" stroke-width="1"/><circle cx="265.2" cy="39.8" r="1.2" fill="#eee" stroke="#3a3a3a" stroke-width="0.8"/><path d="M287,32.8 L290.4,35.2 L287,37.6 Z M290.8,32.8 L294.2,35.2 L290.8,37.6 Z" fill="#1f1f1f"/><path d="M408.4,31.8 L412.6,35 L408.4,38.2 Z" fill="#333"/><path d="M589,41.6 L589,35.4 L590.8,30 L593.6,30 L594.8,35.4 L594.8,41.6 Z M596.4,41.6 L596.4,35.4 L597.6,30 L600.4,30 L602.4,35.4 L602.4,41.6 Z" fill="#eeeeee" stroke="#3f3f3f" stroke-width="1.1" stroke-linejoin="round"/><path d="M594.8,34 L596.4,34 M589,38.2 L594.8,38.2 M596.4,38.2 L602.4,38.2" stroke="#3f3f3f" stroke-width="0.9"/><path d="M612.4,30 Q613.8,37.6 622.6,38.4 Z" fill="#f3f3f3" stroke="#3f3f3f" stroke-width="1.1" stroke-linejoin="round"/><path d="M617.4,34.2 L621.6,29.4" stroke="#3f3f3f" stroke-width="1.1"/><path d="M615.8,37.4 L612.2,41.8 L623.4,41.8 L619.2,38.6" fill="#ececec" stroke="#3f3f3f" stroke-width="1.1" stroke-linejoin="round"/><path d="M639.2,28.8 L641.2,33.6 L646.4,34 L642.4,37.3 L643.7,42.3 L639.2,39.6 L634.7,42.3 L636,37.3 L632,34 L637.2,33.6 Z" fill="#efeff3" stroke="#3f3f3f" stroke-width="1.1" stroke-linejoin="round"/><path d="M662,28 Q666,28 666,32.4 Q666,36 664.2,37.2 Q664.4,38.8 669.6,40.2 L669.6,41.8 L654.4,41.8 L654.4,40.2 Q659.6,38.8 659.8,37.2 Q658,36 658,32.4 Q658,28 662,28 Z" fill="#f1f1f1" stroke="#3f3f3f" stroke-width="1.1" stroke-linejoin="round"/><path d="M752.9,34.300000000000004 L757.1,34.300000000000004 L755,36.9 Z" fill="#3a3a3a"/><path d="M767.6,29.4 L770,29.4 L772.4,37.6 L780.4,37.6 L782.2,31.8 L771,31.8" fill="#e9ecf5" stroke="#3f3f3f" stroke-width="1.2" stroke-linejoin="round"/><circle cx="773.4" cy="40.2" r="1.3" fill="#fff" stroke="#3f3f3f" stroke-width="1"/><circle cx="779.4" cy="40.2" r="1.3" fill="#fff" stroke="#3f3f3f" stroke-width="1"/><rect x="791.2" y="26" width="1" height="18" fill="#dcdcdc"/><circle cx="807.3" cy="34.9" r="7" fill="#f4f6fb" stroke="#3a3a3a" stroke-width="1.2"/><text x="804.1" y="39.3" font-family="Liberation Sans, sans-serif" font-size="12" font-weight="700" fill="#2b4fa0">?</text><path d="M821.6999999999999,34.1 L825.9,34.1 L823.8,36.699999999999996 Z" fill="#3a3a3a"/><rect x="846.3" y="38.8" width="7.8" height="1.7" fill="#1e1e1e"/><rect x="868.1" y="31.4" width="10.2" height="8.6" fill="none" stroke="#1e1e1e" stroke-width="1.1"/><rect x="867.6" y="30.6" width="11.2" height="1.4" fill="#1e1e1e"/><path d="M891.8,30.4 L901.8,39.4 M901.8,30.4 L891.8,39.4" stroke="#1e1e1e" stroke-width="1.7"/><path d="M866.8,57 L870.2,60 L866.8,63 Z M871,57 L874.4,60 L871,63 Z" fill="#f6f6f6"/><rect x="883.4" y="56.6" width="14" height="8" rx="2" fill="#f2f2f2" stroke="#3a3a3a" stroke-width="1"/><path d="M888.2,61.8 L892.6,61.8 L890.4,59.2 Z" fill="#2a2a2a"/><path d="M901.3,59.800000000000004 L905.7,59.800000000000004 L903.5,62.6 Z" fill="#1e1e1e"/><path d="M9,192 L14.6,187.8 L20.4,191 L20.4,197.6 L14.6,200 L9,197.6 Z" fill="#ededed" stroke="#777" stroke-width="1"/><path d="M14.6,193.4 L14.6,200 M9,192 L14.6,193.4 L20.4,191" fill="none" stroke="#777" stroke-width="0.9"/><rect x="126.6" y="188.4" width="8" height="11" fill="#fff" stroke="#9a9a9a" stroke-width="1"/><rect x="131" y="191" width="9" height="8.4" fill="#fafafa" stroke="#9a9a9a" stroke-width="1"/><path d="M894.2,191.6 L901.4,191.6 M894.2,193.6 L901.4,193.6" stroke="#2a2a2a" stroke-width="1"/><path d="M894.4,195.4 L901.2,195.4 L897.8,198.6 Z" fill="#2a2a2a"/></svg>
<svg style="left:0;top:0" width="912" height="210" viewBox="0 0 912 210"><path d="M28.9,79.6 L28.9,94.8 L32.4,91.6 L35,97.8 L37.4,96.8 L34.8,90.8 L39.6,90.6 Z" fill="#ffffff" stroke="#333" stroke-width="1.1" stroke-linejoin="round"/><path d="M79.2,88.6 L81.4,86.39999999999999 L90.4,86.39999999999999 L88.2,88.6 Z" fill="#fafafa" stroke="#4a4a4a" stroke-width="1.0" stroke-linejoin="round"/><path d="M88.2,88.6 L90.4,86.39999999999999 L90.4,95.99999999999999 L88.2,98.19999999999999 Z" fill="#d3d4da" stroke="#4a4a4a" stroke-width="1.0" stroke-linejoin="round"/><rect x="79.2" y="88.6" width="9" height="9.6" fill="#f1f1f3" stroke="#4a4a4a" stroke-width="1.0" stroke-linejoin="round"/><path d="M79.2,77.6 L81.4,75.39999999999999 L90.4,75.39999999999999 L88.2,77.6 Z" fill="#fafafa" stroke="#4a4a4a" stroke-width="1.0" stroke-linejoin="round"/><path d="M88.2,77.6 L90.4,75.39999999999999 L90.4,84.8 L88.2,87.0 Z" fill="#d3d4da" stroke="#4a4a4a" stroke-width="1.0" stroke-linejoin="round"/><rect x="79.2" y="77.6" width="9" height="9.4" fill="#f1f1f3" stroke="#4a4a4a" stroke-width="1.0" stroke-linejoin="round"/><path d="M90.4,77.6 L93.0,75.0 L102.4,75.0 L99.80000000000001,77.6 Z" fill="#fafafa" stroke="#4a4a4a" stroke-width="1.0" stroke-linejoin="round"/><path d="M99.80000000000001,77.6 L102.4,75.0 L102.4,84.4 L99.80000000000001,87.0 Z" fill="#b9bac2" stroke="#4a4a4a" stroke-width="1.0" stroke-linejoin="round"/><rect x="90.4" y="77.6" width="9.4" height="9.4" fill="#f1f1f3" stroke="#4a4a4a" stroke-width="1.0" stroke-linejoin="round"/><rect x="93.8" y="85.4" width="11.8" height="16.2" rx="1.4" fill="#fbfbfb" stroke="#3c3c3c" stroke-width="1"/><rect x="95.8" y="87.4" width="5" height="5" fill="#2f5a96"/><rect x="102" y="87.4" width="1.4" height="5.4" fill="#b8b8b8"/><path d="M96,95.2 L103.4,95.2 M96,98.6 L103.4,98.6" stroke="#555" stroke-width="0.9"/><rect x="100.2" y="97.6" width="1.2" height="2" fill="#444"/><rect x="97.6" y="94.2" width="1.2" height="2" fill="#888"/><rect x="81.6" y="107.4" width="19.4" height="28" rx="1.6" fill="#fdfdfd" stroke="#333" stroke-width="1.1"/><rect x="84.4" y="110.2" width="10" height="10" fill="#2f5a96"/><rect x="86" y="112" width="6.8" height="6.4" fill="#466fa8"/><rect x="96.2" y="110.2" width="1.8" height="10.4" fill="#b4b4b4"/><path d="M85.2,124.4 L97.2,124.4 M85.2,130.2 L97.2,130.2" stroke="#555" stroke-width="1"/><rect x="87.2" y="122.4" width="1.6" height="4" fill="#666"/><rect x="94.2" y="128.2" width="1.6" height="4" fill="#444"/><rect x="145.8" y="77.8" width="19.4" height="22.2" rx="1.6" fill="#e3e3e3" stroke="#c9c9c9" stroke-width="1"/><rect x="150.6" y="75.6" width="9.8" height="4.4" rx="2" fill="#e6e6e6" stroke="#c9c9c9" stroke-width="1"/><path d="M153,82.8 L163.4,82.8 L168.4,88 L168.4,102.4 L153,102.4 Z" fill="#ececec" stroke="#cfcfcf" stroke-width="1" stroke-linejoin="round"/><path d="M163.4,82.8 L163.4,88 L168.4,88" fill="none" stroke="#cfcfcf" stroke-width="1"/><path d="M154.6,123.89999999999999 L159.20000000000002,123.89999999999999 L156.9,126.7 Z" fill="#a6a6a6"/><path d="M195.2,77 L204.6,87.6 M206.8,77 L197.4,87.6" stroke="#2e2e2e" stroke-width="1.7" stroke-linecap="round"/><ellipse cx="196.4" cy="88" rx="1.9" ry="1.5" transform="rotate(-48 196.4 88)" fill="#f4f4f4" stroke="#2e2e2e" stroke-width="1"/><ellipse cx="205.6" cy="88" rx="1.9" ry="1.5" transform="rotate(48 205.6 88)" fill="#f4f4f4" stroke="#2e2e2e" stroke-width="1"/><path d="M197.2,98.6 L194,98.6 L194,110.4 L196.6,110.4" fill="none" stroke="#3a3a3a" stroke-width="1.1"/><path d="M198,100.4 L204.2,100.4 L208,104.2 L208,112.4 L198,112.4 Z" fill="#f0f1f6" stroke="#3a3a3a" stroke-width="1.1" stroke-linejoin="round"/><path d="M204.2,100.4 L204.2,104.2 L208,104.2" fill="none" stroke="#3a3a3a" stroke-width="0.9"/><rect x="193.8" y="120.6" width="7.2" height="9" rx="1" fill="#f4f4f4" stroke="#3a3a3a" stroke-width="1"/><rect x="195.6" y="122.4" width="3.6" height="1.6" fill="#2f5a96"/><path d="M195.6,126.2 L199.2,126.2" stroke="#777" stroke-width="0.8"/><path d="M208.2,121.6 L200.2,130.2 L202.2,131.6 Z" fill="#777" stroke="#444" stroke-width="0.7"/><path d="M200.6,130 Q197.4,131.4 194,134.6 Q199.6,135.2 202.6,131.6 Z" fill="#5c5c5c"/><path d="M51.300000000000004,146.1 L57.9,146.1 L54.6,149.9 Z" fill="#333"/><circle cx="235.8" cy="82.4" r="7.2" fill="#e8e8e8" stroke="#555" stroke-width="1"/><path d="M230,79 L241.6,79 M229,82.4 L242.6,82.4 M230,85.8 L241.6,85.8 M232.4,76.4 L232.4,88.6 M235.8,75.4 L235.8,89.4 M239.2,76.4 L239.2,88.6" stroke="#8d8d8d" stroke-width="0.9"/><path d="M232.4,91 Q232.4,95.6 236.6,95.6" fill="none" stroke="#222" stroke-width="1.3"/><path d="M236,93.2 L239,95.6 L236,98 Z" fill="#222"/><path d="M240.8,91.6 L244.0,88.39999999999999 L255.6,88.39999999999999 L252.4,91.6 Z" fill="#f8f8fa" stroke="#555" stroke-width="1.0" stroke-linejoin="round"/><path d="M252.4,91.6 L255.6,88.39999999999999 L255.6,98.99999999999999 L252.4,102.19999999999999 Z" fill="#cfd0d8" stroke="#555" stroke-width="1.0" stroke-linejoin="round"/><rect x="240.8" y="91.6" width="11.6" height="10.6" fill="#e9eaf0" stroke="#555" stroke-width="1.0" stroke-linejoin="round"/><path d="M285.2,75.4 L285.2,103.2" stroke="#444" stroke-width="1.3"/><rect x="287.6" y="78.4" width="10.2" height="8.6" fill="#a9c8ec" stroke="#3f7ac2" stroke-width="1.1"/><rect x="287.6" y="90.4" width="24" height="10.6" fill="#e9e9ec" stroke="#555" stroke-width="1.1"/><path d="M355.8,76.6 Q364.6,76.6 364.6,85 Q364.6,89 361,93.4 L360.6,97 L351,97 L350.6,93.4 Q347,89 347,85 Q347,76.6 355.8,76.6 Z" fill="#c5d5ea" stroke="#555" stroke-width="1.1"/><ellipse cx="353" cy="82.6" rx="2.6" ry="3.4" fill="#eef3fa" opacity="0.9"/><rect x="351.4" y="96.4" width="8.8" height="4.4" fill="#f2f2f2" stroke="#444" stroke-width="1"/><path d="M353,100.8 L358.6,100.8 L355.8,103.6 Z" fill="#333"/><path d="M398.4,84.4 L425,84.4" stroke="#222" stroke-width="1.2"/><path d="M398,84.4 L402,81.8 L402,87 Z M425.4,84.4 L421.4,81.8 L421.4,87 Z" fill="#222"/><rect x="398.2" y="92" width="27" height="5" fill="#f0c040" stroke="#c79a1e" stroke-width="0.9"/><path d="M401,94.4 L423,94.4" stroke="#b88a14" stroke-width="0.8" stroke-dasharray="1.2 1.2"/><path d="M458.8,76.4 L455,76.4 L455,103.2 L458.8,103.2 M478.6,76.4 L482.4,76.4 L482.4,103.2 L478.6,103.2" fill="none" stroke="#555" stroke-width="1.3"/><path d="M458.6,83.4 L461.0,81.0 L470.4,81.0 L468.0,83.4 Z" fill="#c4dbf4" stroke="#4a78b4" stroke-width="1.0" stroke-linejoin="round"/><path d="M468.0,83.4 L470.4,81.0 L470.4,89.6 L468.0,92.0 Z" fill="#6f9fd4" stroke="#4a78b4" stroke-width="1.0" stroke-linejoin="round"/><rect x="458.6" y="83.4" width="9.4" height="8.6" fill="#8fb8e6" stroke="#4a78b4" stroke-width="1.0" stroke-linejoin="round"/><path d="M458.6,92.6 L461.0,90.19999999999999 L470.4,90.19999999999999 L468.0,92.6 Z" fill="#f4f4f6" stroke="#666" stroke-width="1.0" stroke-linejoin="round"/><path d="M468.0,92.6 L470.4,90.19999999999999 L470.4,98.6 L468.0,101.0 Z" fill="#c8c9d0" stroke="#666" stroke-width="1.0" stroke-linejoin="round"/><rect x="458.6" y="92.6" width="9.4" height="8.4" fill="#e6e7ec" stroke="#666" stroke-width="1.0" stroke-linejoin="round"/><path d="M468.6,92.6 L471.0,90.19999999999999 L480.4,90.19999999999999 L478.0,92.6 Z" fill="#f4f4f6" stroke="#666" stroke-width="1.0" stroke-linejoin="round"/><path d="M478.0,92.6 L480.4,90.19999999999999 L480.4,98.6 L478.0,101.0 Z" fill="#c8c9d0" stroke="#666" stroke-width="1.0" stroke-linejoin="round"/><rect x="468.6" y="92.6" width="9.4" height="8.4" fill="#e6e7ec" stroke="#666" stroke-width="1.0" stroke-linejoin="round"/><path d="M516,77.4 L537.6,77.4 L537.6,99.4 L516,99.4 L516,89.4 L528,89.4 L528,77.4" fill="#f3f3f5" stroke="#555" stroke-width="1.2"/><rect x="516" y="77.4" width="11.4" height="11.4" fill="#dcdde3" stroke="#555" stroke-width="1.2"/><path d="M540.6,89.6 L543.4,92.4 L532.6,102.6 L528.8,103.6 L529.8,99.8 Z" fill="#e9c25c" stroke="#7a6a3a" stroke-width="0.9" stroke-linejoin="round"/><path d="M528.8,103.6 L529.6,100.8 L531.4,102.8 Z" fill="#333"/><rect x="576.6" y="75.6" width="3.4" height="11" fill="#e4e5ea" stroke="#555" stroke-width="1"/><rect x="574.4" y="84.6" width="7.8" height="16" fill="#d9dae0" stroke="#4c4c4c" stroke-width="1.1"/><rect x="570" y="92.8" width="4.6" height="7.6" fill="#ececf0" stroke="#555" stroke-width="1"/><rect x="582.2" y="92" width="15.6" height="8.6" fill="#ececf0" stroke="#555" stroke-width="1.1"/><path d="M589,92 L589,100.6 M592,92 L592,100.6 M595,92 L595,100.6" stroke="#555" stroke-width="1"/><rect x="573" y="86" width="2.4" height="7" fill="#555"/><rect x="626.4" y="79" width="12.6" height="5.6" fill="#8e9097" stroke="#4a4a4a" stroke-width="1"/><rect x="639" y="80.4" width="8" height="3.4" fill="#dcdde2" stroke="#555" stroke-width="0.9"/><rect x="646.8" y="75.8" width="7.6" height="11.2" rx="1" fill="#8e9097" stroke="#4a4a4a" stroke-width="1"/><rect x="630.6" y="84.6" width="4.4" height="10.6" fill="#dcdde2" stroke="#555" stroke-width="0.9"/><rect x="626.4" y="95.2" width="12.6" height="6.6" rx="1" fill="#8e9097" stroke="#4a4a4a" stroke-width="1"/><path d="M650,89.2 L644,96 L648.4,96 L642.6,103.4 L653.8,94.6 L649.2,94.6 L654,89.2 Z" fill="#efc030" stroke="#9a7a1a" stroke-width="0.8" stroke-linejoin="round"/><path d="M684,88.6 L691.6,88.6 L697.6,80.2 L711.2,80.2 L711.2,97.6 L684,97.6 Z" fill="#d9dae0"/><path d="M684,88.6 L691.6,88.6 L697.6,80.2 L711.2,80.2" fill="none" stroke="#8a8a90" stroke-width="1.2"/><path d="M684,97.6 L711.2,97.6" stroke="#7c7c82" stroke-width="1.3"/><path d="M684,91 L692,91 L698,83 L711.2,83 L711.2,87 L699,87 L693,94.4 L684,94.4 Z" fill="#f6f6f8"/><path d="M684.4,101.4 L711,101.4" stroke="#555" stroke-width="1.1" stroke-dasharray="3.2 1.6"/><path d="M742.6,89.4 L759.4,79.4 Q765.6,77.4 768,82.4 Q769.6,87.6 764,90.4 L748.6,99.8 Z" fill="#9cc4ea" stroke="#5e8fc4" stroke-width="0.9"/><path d="M745.6,87.8 L761.6,78.6 Q764,78 765.6,79.4 L748,89.6 Z" fill="#d4e6f7"/><ellipse cx="745.4" cy="94.6" rx="4.8" ry="5.6" transform="rotate(-28 745.4 94.6)" fill="#6f9fd0" stroke="#466f9e" stroke-width="0.9"/><ellipse cx="745.4" cy="94.6" rx="2.4" ry="3" transform="rotate(-28 745.4 94.6)" fill="#b7b9c2" stroke="#5b6b82" stroke-width="0.7"/><path d="M761.6,94.2 L764.8,94.2 L764.8,91 L768,91 L768,94.2 L771.2,94.2 L771.2,97.4 L768,97.4 L768,100.6 L764.8,100.6 L764.8,97.4 L761.6,97.4 Z" fill="#2f9e3a" stroke="#1c7427" stroke-width="0.6"/><path d="M239.29999999999998,148.0 L245.9,148.0 L242.6,151.60000000000002 Z" fill="#222"/><path d="M295.7,148.0 L302.3,148.0 L299,151.60000000000002 Z" fill="#222"/><path d="M352.4,148.0 L359.0,148.0 L355.7,151.60000000000002 Z" fill="#222"/><path d="M408.7,148.0 L415.3,148.0 L412,151.60000000000002 Z" fill="#222"/><path d="M465.4,148.0 L472.0,148.0 L468.7,151.60000000000002 Z" fill="#222"/><path d="M524.4000000000001,148.0 L531.0,148.0 L527.7,151.60000000000002 Z" fill="#222"/><path d="M580.7,148.0 L587.3,148.0 L584,151.60000000000002 Z" fill="#222"/><path d="M637.2,148.0 L643.8,148.0 L640.5,151.60000000000002 Z" fill="#222"/><path d="M693.9000000000001,148.0 L700.5,148.0 L697.2,151.60000000000002 Z" fill="#222"/><path d="M750.7,148.0 L757.3,148.0 L754,151.60000000000002 Z" fill="#222"/></svg>
<svg style="left:905px;top:16px" width="873" height="100" viewBox="905 16 873 100"><circle cx="920.6" cy="29.6" r="6.6" fill="#f3f3f3" stroke="#5a78b0" stroke-width="1.2"/><path d="M914.4,29.2 L927,29.2 M920.8,23.4 L920.8,36.4" stroke="#b06050" stroke-width="0.9"/><path d="M920.4,22.4 L927,22.4 L925.6,25.2 L922.6,25.2 L922.6,27.2 L925.2,27.2 L925.2,29 L922.6,29 L922.6,36.6 L920,36.6 Z" fill="#e02828"/><path d="M914.6,36.8 L917,32.2 L918.4,34.2 L920.2,31.2 L920.2,36.8 Z" fill="#e02828"/><rect x="1679.5" y="21" width="27.59999999999991" height="15.4" rx="2.4" fill="#d7e1ee" stroke="#a3b2c9" stroke-width="1"/><rect x="1680.5" y="22" width="25.59999999999991" height="6.6" rx="1.6" fill="#e9eff8" opacity="0.9"/><rect x="1711.5" y="21" width="27.5" height="15.4" rx="2.4" fill="#d7e1ee" stroke="#a3b2c9" stroke-width="1"/><rect x="1712.5" y="22" width="25.5" height="6.6" rx="1.6" fill="#e9eff8" opacity="0.9"/><rect x="1742.5" y="21" width="28" height="15.4" rx="2.4" fill="#d7e1ee" stroke="#a3b2c9" stroke-width="1"/><rect x="1743.5" y="22" width="26" height="6.6" rx="1.6" fill="#e9eff8" opacity="0.9"/><rect x="1687.8" y="29.4" width="10.4" height="3.6" rx="1" fill="#f8f9fb" stroke="#8d8f96" stroke-width="1"/><rect x="1720.4" y="24.4" width="9.6" height="8" rx="1" fill="#f8f9fb" stroke="#8d8f96" stroke-width="1"/><rect x="1723.2" y="27.2" width="4" height="2.6" fill="#dfe4ee" stroke="#8d8f96" stroke-width="0.8"/><path d="M1752.8,25.4 L1760.4,32.2 M1760.4,25.4 L1752.8,32.2" stroke="#8d8f96" stroke-width="3.6" stroke-linecap="round"/><path d="M1752.8,25.4 L1760.4,32.2 M1760.4,25.4 L1752.8,32.2" stroke="#f8f9fb" stroke-width="1.7" stroke-linecap="round"/><rect x="915.4" y="44" width="1.2" height="1.2" fill="#9aa4b8"/><rect x="916.1999999999999" y="44.8" width="1" height="1" fill="#ffffff"/><rect x="915.4" y="47" width="1.2" height="1.2" fill="#9aa4b8"/><rect x="916.1999999999999" y="47.8" width="1" height="1" fill="#ffffff"/><rect x="915.4" y="50" width="1.2" height="1.2" fill="#9aa4b8"/><rect x="916.1999999999999" y="50.8" width="1" height="1" fill="#ffffff"/><rect x="915.4" y="53" width="1.2" height="1.2" fill="#9aa4b8"/><rect x="916.1999999999999" y="53.8" width="1" height="1" fill="#ffffff"/><rect x="915.4" y="56" width="1.2" height="1.2" fill="#9aa4b8"/><rect x="916.1999999999999" y="56.8" width="1" height="1" fill="#ffffff"/><rect x="915.4" y="59" width="1.2" height="1.2" fill="#9aa4b8"/><rect x="916.1999999999999" y="59.8" width="1" height="1" fill="#ffffff"/><path d="M922.6,44.4 L931.6,44.4 L935.6,48.2 L935.6,58.6 L922.6,58.6 Z" fill="#fbfcff" stroke="#8a92a8" stroke-width="1"/><path d="M931.6,44.4 L931.6,48.2 L935.6,48.2" fill="#dfe4f0" stroke="#8a92a8" stroke-width="0.8"/><path d="M927,46.4 L927,55 L933.6,55 M927,55 L924.2,57.2" fill="none" stroke="#2f9a2f" stroke-width="1.5"/><path d="M927,46 l-1.2,1.8 l2.4,0 Z" fill="#222"/><path d="M934,55 l-1.8,-1.2 l0,2.4 Z" fill="#222"/><rect x="1716.6" y="54.6" width="6.4" height="1.8" fill="#111"/><rect x="1736.6" y="50.4" width="5.6" height="5" fill="#eef2fa" stroke="#111" stroke-width="1.1"/><path d="M1738.6,50.2 L1738.6,48.4 L1744,48.4 L1744,53.4 L1742.4,53.4" fill="none" stroke="#111" stroke-width="1.1"/><path d="M1758.4,48.6 L1765.6,55.8 M1765.6,48.6 L1758.4,55.8" stroke="#111" stroke-width="1.5"/><rect x="917.6" y="69.5" width="1.2" height="1.2" fill="#9aa4b8"/><rect x="918.4" y="70.3" width="1" height="1" fill="#ffffff"/><rect x="917.6" y="72.5" width="1.2" height="1.2" fill="#9aa4b8"/><rect x="918.4" y="73.3" width="1" height="1" fill="#ffffff"/><rect x="917.6" y="75.5" width="1.2" height="1.2" fill="#9aa4b8"/><rect x="918.4" y="76.3" width="1" height="1" fill="#ffffff"/><rect x="917.6" y="78.5" width="1.2" height="1.2" fill="#9aa4b8"/><rect x="918.4" y="79.3" width="1" height="1" fill="#ffffff"/><rect x="917.6" y="81.5" width="1.2" height="1.2" fill="#9aa4b8"/><rect x="918.4" y="82.3" width="1" height="1" fill="#ffffff"/><path d="M926.8,70 L933,70 L936.2,73.2 L936.2,82.4 L926.8,82.4 Z" fill="#ffffff" stroke="#4a4f5c" stroke-width="1"/><path d="M933,70 L933,73.2 L936.2,73.2" fill="#d8dce6" stroke="#4a4f5c" stroke-width="0.8"/><path d="M945.6,82 L945.6,72.4 L949.6,72.4 L950.8,73.8 L957,73.8 L957,76" fill="#e8c663" stroke="#9a7a22" stroke-width="0.9"/><path d="M945.6,82 L948.4,75.8 L960.4,75.8 L957.2,82 Z" fill="#f3d97e" stroke="#9a7a22" stroke-width="0.9" stroke-linejoin="round"/><path d="M954.6,71.6 Q957.4,69.6 959.6,71.8" fill="none" stroke="#333" stroke-width="0.9"/><path d="M960.4,70.4 L960.2,73 L957.8,72.4 Z" fill="#333"/><rect x="968.4" y="70.2" width="12.6" height="12.2" rx="0.8" fill="#4152b8" stroke="#2b357e" stroke-width="0.8"/><rect x="970.8" y="70.8" width="7.6" height="5.2" fill="#f4f6fc"/><rect x="971.4" y="78" width="6.6" height="4.2" fill="#c9cde0"/><rect x="972.4" y="78.8" width="2" height="3" fill="#20285c"/><rect x="988.4" y="70.2" width="12.6" height="12.2" rx="0.8" fill="#4152b8" stroke="#2b357e" stroke-width="0.8"/><rect x="990.8" y="70.8" width="7.6" height="5.2" fill="#f4f6fc"/><rect x="991.4" y="78" width="6.6" height="4.2" fill="#c9cde0"/><rect x="992.4" y="78.8" width="2" height="3" fill="#20285c"/><path d="M994.2,71.4 L996.4,70 L1003.4,80.4 L1002.6,82.8 L1000.2,81.6 Z" fill="#d9b45a" stroke="#6e5a2a" stroke-width="0.8"/><rect x="1009.4" y="68" width="1" height="17" fill="#c3c9d6"/><rect x="1010.4" y="68" width="1" height="17" fill="#f6f8fc"/><path d="M1016.4,70 L1022.6,70 L1025.6,73 L1025.6,82.4 L1016.4,82.4 Z" fill="#ffffff" stroke="#4a4f5c" stroke-width="1"/><circle cx="1023.4" cy="76.8" r="3.2" fill="#eef2fa" stroke="#555" stroke-width="1"/><path d="M1025.6,79.4 L1029,83" stroke="#a87a3a" stroke-width="1.8" stroke-linecap="round"/><path d="M1039.6,75 L1042.4,70 L1050,70 L1047.6,75 Z" fill="#ffffff" stroke="#555" stroke-width="0.9"/><path d="M1036.4,76.6 L1039.4,74.4 L1050.4,74.4 L1047.6,76.6 Z" fill="#e2e5ee" stroke="#555" stroke-width="0.8"/><rect x="1036.4" y="76.6" width="11.4" height="5.4" fill="#f4f5f9" stroke="#555" stroke-width="0.9"/><path d="M1047.8,76.6 L1050.6,74.4 L1050.6,79.6 L1047.8,82 Z" fill="#c5c9d6" stroke="#555" stroke-width="0.8"/><rect x="1057.4" y="68" width="1" height="17" fill="#c3c9d6"/><rect x="1058.4" y="68" width="1" height="17" fill="#f6f8fc"/><rect x="1063.6" y="70.2" width="14.2" height="8.4" fill="#2f4f9c"/><rect x="1065.2" y="71.6" width="2.6" height="6" fill="#fff"/><rect x="1069.4" y="71.6" width="2.6" height="6" fill="#fff"/><rect x="1073.6" y="71.6" width="2.6" height="6" fill="#fff"/><rect x="1063.6" y="79.4" width="14.2" height="2.8" fill="#dfe6f6" stroke="#2f4f9c" stroke-width="0.8"/><rect x="1082.5" y="67.0" width="20" height="19.2" fill="#9dbfea" stroke="#3b78cc" stroke-width="1"/><path d="M1086,69.6 L1094.6,69.6 L1098.6,73.4 L1098.6,83.6 L1086,83.6 Z" fill="#fbfcff" stroke="#6b7488" stroke-width="0.9"/><path d="M1090.4,71.6 L1090.4,80 L1097,80 M1090.4,80 L1087.4,82.4" fill="none" stroke="#2f9a2f" stroke-width="1.6"/><path d="M1090.4,71 l-1.3,2 l2.6,0 Z M1097.6,80 l-2,-1.3 l0,2.6 Z" fill="#222"/><path d="M1107.4,70.4 L1114.4,70.4 L1117.4,73.4 L1117.4,82.6 L1107.4,82.6 Z" fill="#e4e8f1" stroke="#b9c0cf" stroke-width="0.9"/><circle cx="1116.4" cy="79.4" r="3.4" fill="#dde2ec" stroke="#b4bccb" stroke-width="0.9"/><path d="M1127.6,70.4 L1134.6,70.4 L1137.6,73.4 L1137.6,82.6 L1127.6,82.6 Z" fill="#e4e8f1" stroke="#b9c0cf" stroke-width="0.9"/><circle cx="1136.6" cy="79.4" r="3.4" fill="#dde2ec" stroke="#b4bccb" stroke-width="0.9"/><rect x="1148.4" y="68" width="1" height="17" fill="#c3c9d6"/><rect x="1149.4" y="68" width="1" height="17" fill="#f6f8fc"/><rect x="1154.2" y="70.2" width="13.4" height="12.6" rx="0.8" fill="#f4f6fc" stroke="#3a5cb0" stroke-width="1"/><rect x="1154.2" y="70.2" width="13.4" height="3.6" fill="#3a5cb0"/><rect x="1155.8" y="75.4" width="1.8" height="2" fill="#3a5cb0"/><rect x="1155.8" y="78.80000000000001" width="1.8" height="2" fill="#3a5cb0"/><rect x="1158.8" y="75.4" width="1.8" height="2" fill="#3a5cb0"/><rect x="1158.8" y="78.80000000000001" width="1.8" height="2" fill="#3a5cb0"/><rect x="1161.8" y="75.4" width="1.8" height="2" fill="#3a5cb0"/><rect x="1161.8" y="78.80000000000001" width="1.8" height="2" fill="#3a5cb0"/><rect x="1164.8" y="75.4" width="1.8" height="2" fill="#3a5cb0"/><rect x="1164.8" y="78.80000000000001" width="1.8" height="2" fill="#3a5cb0"/><rect x="1164.8" y="75.4" width="1.8" height="2" fill="#b04a4a"/><rect x="1175.2" y="68" width="1" height="17" fill="#c3c9d6"/><rect x="1176.2" y="68" width="1" height="17" fill="#f6f8fc"/><path d="M1185.4,70.6 L1190.4,79 M1191.6,70.6 L1186.6,79" stroke="#b6bdcc" stroke-width="1.4"/><circle cx="1185.8" cy="80.6" r="1.8" fill="none" stroke="#b6bdcc" stroke-width="1.1"/><circle cx="1191.2" cy="80.6" r="1.8" fill="none" stroke="#b6bdcc" stroke-width="1.1"/><rect x="1203.2" y="70.6" width="7.2" height="8.4" fill="#e3e7f0" stroke="#bac1d0" stroke-width="0.9"/><rect x="1208" y="74" width="7.6" height="8.6" fill="#e8ebf3" stroke="#bac1d0" stroke-width="0.9"/><rect x="1223.4" y="71.4" width="10.4" height="10.8" fill="#d9deea" stroke="#b4bbcb" stroke-width="0.9"/><rect x="1226.4" y="70" width="4.6" height="2.8" fill="#cfd5e2" stroke="#b4bbcb" stroke-width="0.7"/><rect x="1229.6" y="75.4" width="8" height="7.4" fill="#e8ebf3" stroke="#bac1d0" stroke-width="0.9"/><path d="M1243.8,74.7 L1248.2,74.7 L1246,77.3 Z" fill="#a9b0c0"/><rect x="1254.6" y="68" width="1" height="17" fill="#c3c9d6"/><rect x="1255.6" y="68" width="1" height="17" fill="#f6f8fc"/><path d="M1263.4,71.4 L1263.6,76.6 L1268.6,75.4 L1266.8,74 Q1270.6,72.6 1271.6,76 Q1272.2,79.4 1267.6,81.6 Q1274.6,80.6 1274.4,75.4 Q1273.4,70.4 1266,72.4 Z" fill="#2c58c4" stroke="#1e3f96" stroke-width="0.5"/><path d="M1294,71.4 L1293.8,76.6 L1288.8,75.4 L1290.6,74 Q1286.8,72.6 1285.8,76 Q1285.2,79.4 1289.8,81.6 Q1282.8,80.6 1283,75.4 Q1284,70.4 1291.4,72.4 Z" fill="#cfd5e3" stroke="#b7bece" stroke-width="0.5"/><rect x="1302.6" y="68" width="1" height="17" fill="#c3c9d6"/><rect x="1303.6" y="68" width="1" height="17" fill="#f6f8fc"/><path d="M1316,72.6 L1310.4,81.4 L1321.8,81.4 Z" fill="none" stroke="#333" stroke-width="1.2"/><circle cx="1316" cy="71.8" r="2" fill="#6a9ae0" stroke="#2b4f9a" stroke-width="0.7"/><circle cx="1310" cy="81.4" r="1.8" fill="#e6c45a" stroke="#7a6420" stroke-width="0.7"/><circle cx="1322" cy="81.4" r="1.8" fill="#e6c45a" stroke="#7a6420" stroke-width="0.7"/><rect x="1329.6" y="68" width="1" height="17" fill="#c3c9d6"/><rect x="1330.6" y="68" width="1" height="17" fill="#f6f8fc"/><circle cx="1343.6" cy="76.6" r="5.8" fill="#3468c0" stroke="#8fb0e4" stroke-width="1.2"/><text x="1341" y="80.4" font-family="Liberation Sans, sans-serif" font-size="9.5" font-weight="700" fill="#ffffff">?</text><path d="M1335.4,69.8 L1335.4,79 L1337.6,77.2 L1339.2,80.6 L1340.6,80 L1339,76.6 L1341.6,76.4 Z" fill="#ffffff" stroke="#222" stroke-width="0.8"/><path d="M1491.6,65.4 L1498.1999999999998,65.4 Q1502.1999999999998,65.4 1502.1999999999998,69.4 L1502.1999999999998,83.80000000000001 Q1502.1999999999998,87.80000000000001 1498.1999999999998,87.80000000000001 L1491.6,87.80000000000001 Z" fill="#dce1ed" stroke="#ccd3e2" stroke-width="0.6"/><path d="M1493.9999999999998,68.60000000000001 l2,1.6 l-2,1.6 Z M1497.6,68.60000000000001 l2,1.6 l-2,1.6 Z" fill="#1a1a1a"/><rect x="1494.8" y="79.20000000000002" width="5.2" height="1.3" fill="#1a1a1a"/><path d="M1494.6,81.80000000000001 L1500.1999999999998,81.80000000000001 L1497.3999999999999,84.80000000000001 Z" fill="#1a1a1a"/><rect x="1508" y="69.5" width="1.2" height="1.2" fill="#9aa4b8"/><rect x="1508.8" y="70.3" width="1" height="1" fill="#ffffff"/><rect x="1508" y="72.5" width="1.2" height="1.2" fill="#9aa4b8"/><rect x="1508.8" y="73.3" width="1" height="1" fill="#ffffff"/><rect x="1508" y="75.5" width="1.2" height="1.2" fill="#9aa4b8"/><rect x="1508.8" y="76.3" width="1" height="1" fill="#ffffff"/><rect x="1508" y="78.5" width="1.2" height="1.2" fill="#9aa4b8"/><rect x="1508.8" y="79.3" width="1" height="1" fill="#ffffff"/><rect x="1508" y="81.5" width="1.2" height="1.2" fill="#9aa4b8"/><rect x="1508.8" y="82.3" width="1" height="1" fill="#ffffff"/><rect x="1512.5" y="67.0" width="20.6" height="19.2" fill="#9dbfea" stroke="#3b78cc" stroke-width="1"/><text x="1514.2" y="81.4" font-family="Liberation Serif, serif" font-size="12.5" fill="#5b54b8" textLength="17" lengthAdjust="spacingAndGlyphs">3D</text><rect x="1536.8" y="68" width="1" height="17" fill="#c3c9d6"/><rect x="1537.8" y="68" width="1" height="17" fill="#f6f8fc"/><path d="M1542,82.4 L1542,76 L1544,71 L1547,71 L1548,76 L1548,82.4 Z M1549.6,82.4 L1549.6,76 L1550.6,71 L1553.6,71 L1555.6,76 L1555.6,82.4 Z" fill="#5f7fb8" stroke="#24365e" stroke-width="0.9" stroke-linejoin="round"/><rect x="1547.6" y="74.6" width="2.4" height="2.6" fill="#24365e"/><rect x="1543.2" y="78.4" width="3.6" height="3" fill="#dfe8f8"/><rect x="1550.8" y="78.4" width="3.6" height="3" fill="#dfe8f8"/><rect x="1563" y="68" width="1" height="17" fill="#c3c9d6"/><rect x="1564" y="68" width="1" height="17" fill="#f6f8fc"/><path d="M1568.6,73.6 L1575.6,70.2 L1583,73.2 L1583,80.4 L1576,83.6 L1568.6,80.6 Z" fill="#7fc0ee" stroke="#1f2f4a" stroke-width="1.1" stroke-linejoin="round"/><path d="M1568.6,73.6 L1576,76.6 L1583,73.2 M1576,76.6 L1576,83.6" fill="none" stroke="#1f2f4a" stroke-width="1"/><path d="M1568.6,73.6 L1576,76.6 L1576,83.6 L1568.6,80.6 Z" fill="#4a90d8" opacity="0.8"/><path d="M1589.3,75.3 L1593.8999999999999,75.3 L1591.6,77.89999999999999 Z" fill="#111"/><rect x="1599.6" y="68" width="1" height="17" fill="#c3c9d6"/><rect x="1600.6" y="68" width="1" height="17" fill="#f6f8fc"/><rect x="1605.4" y="70.4" width="8" height="7" fill="none" stroke="#333" stroke-width="1" stroke-dasharray="1.4 1.2"/><circle cx="1613.4" cy="76.4" r="3.2" fill="#e8f0fb" stroke="#667" stroke-width="1"/><path d="M1615.6,79 L1619.4,83" stroke="#b08a4a" stroke-width="1.8" stroke-linecap="round"/><rect x="1628.8" y="72.4" width="9.6" height="9" fill="#eef2fa" stroke="#222" stroke-width="1.2"/><path d="M1626.4,73.4 L1626.4,70.2 L1629.6,70.2 M1637.6,70.2 L1640.8,70.2 L1640.8,73.4 M1640.8,80.4 L1640.8,83.6 L1637.6,83.6 M1629.6,83.6 L1626.4,83.6 L1626.4,80.4" fill="none" stroke="#222" stroke-width="1.2"/><rect x="1647.6" y="68" width="1" height="17" fill="#c3c9d6"/><rect x="1648.6" y="68" width="1" height="17" fill="#f6f8fc"/><rect x="1651.5" y="67.0" width="20.6" height="19.2" fill="#9dbfea" stroke="#3b78cc" stroke-width="1"/><path d="M1658.4,69.6 L1658.4,81.2 L1661,79 L1662.8,83.2 L1664.8,82.4 L1663,78.4 L1666.6,78.2 Z" fill="#ffffff" stroke="#8a96b0" stroke-width="0.9" stroke-linejoin="round"/><path d="M1682.4,69.6 L1685.2,72.6 L1683.4,72.6 L1683.4,75.6 L1686.4,75.6 L1686.4,73.8 L1689.4,76.6 L1686.4,79.4 L1686.4,77.6 L1683.4,77.6 L1683.4,80.6 L1685.2,80.6 L1682.4,83.6 L1679.6,80.6 L1681.4,80.6 L1681.4,77.6 L1678.4,77.6 L1678.4,79.4 L1675.4,76.6 L1678.4,73.8 L1678.4,75.6 L1681.4,75.6 L1681.4,72.6 L1679.6,72.6 Z" fill="#3a5ea8" stroke="#22386a" stroke-width="0.6"/><circle cx="1702.8" cy="74.8" r="4.4" fill="#eef4fc" stroke="#667" stroke-width="1.1"/><path d="M1702.8,72.6 L1702.8,77 M1701,75.4 L1704.6,75.4" stroke="#335" stroke-width="0.9"/><path d="M1706,78.4 L1711.4,83.4" stroke="#b08a4a" stroke-width="2" stroke-linecap="round"/><path d="M1719.4,75.4 Q1720.4,70.6 1725.4,70.4 Q1728.4,70.4 1730.0,72.4 L1731.6000000000001,70.8 L1731.8000000000002,75.8 L1727.0,75.2 L1728.4,73.8 Q1726.8000000000002,72.6 1725.4,72.8 Q1722.4,73.2 1722.0,75.8 Z" fill="#3f5f9e" stroke="#26406e" stroke-width="0.5"/><path d="M1731.4,78.2 Q1730.4,83 1725.4,83.2 Q1722.4,83.2 1720.8000000000002,81.2 L1719.2,82.8 L1719.0,77.8 L1723.8000000000002,78.4 L1722.4,79.8 Q1724.0,81 1725.4,80.8 Q1728.4,80.4 1728.8000000000002,77.8 Z" fill="#3f5f9e" stroke="#26406e" stroke-width="0.5"/><path d="M1740.6,75.4 Q1741.6,70.6 1746.6,70.4 Q1749.6,70.4 1751.1999999999998,72.4 L1752.8,70.8 L1753.0,75.8 L1748.1999999999998,75.2 L1749.6,73.8 Q1748.0,72.6 1746.6,72.8 Q1743.6,73.2 1743.1999999999998,75.8 Z" fill="#3f5f9e" stroke="#26406e" stroke-width="0.5"/><path d="M1752.6,78.2 Q1751.6,83 1746.6,83.2 Q1743.6,83.2 1742.0,81.2 L1740.3999999999999,82.8 L1740.1999999999998,77.8 L1745.0,78.4 L1743.6,79.8 Q1745.1999999999998,81 1746.6,80.8 Q1749.6,80.4 1750.0,77.8 Z" fill="#3f5f9e" stroke="#26406e" stroke-width="0.5"/><path d="M1744,76.8 l2,2 l3.4,-4" fill="none" stroke="#3f5f9e" stroke-width="1.3"/><path d="M1761.6,65.4 L1768.0,65.4 Q1772.0,65.4 1772.0,69.4 L1772.0,83.80000000000001 Q1772.0,87.80000000000001 1768.0,87.80000000000001 L1761.6,87.80000000000001 Z" fill="#dce1ed" stroke="#ccd3e2" stroke-width="0.6"/><rect x="1764.7" y="79.20000000000002" width="5.2" height="1.3" fill="#1a1a1a"/><path d="M1764.5,81.80000000000001 L1770.1,81.80000000000001 L1767.3,84.80000000000001 Z" fill="#1a1a1a"/><rect x="917.6" y="94" width="1.2" height="1.2" fill="#9aa4b8"/><rect x="918.4" y="94.8" width="1" height="1" fill="#ffffff"/><rect x="917.6" y="97" width="1.2" height="1.2" fill="#9aa4b8"/><rect x="918.4" y="97.8" width="1" height="1" fill="#ffffff"/><rect x="917.6" y="100" width="1.2" height="1.2" fill="#9aa4b8"/><rect x="918.4" y="100.8" width="1" height="1" fill="#ffffff"/><rect x="917.6" y="103" width="1.2" height="1.2" fill="#9aa4b8"/><rect x="918.4" y="103.8" width="1" height="1" fill="#ffffff"/><rect x="917.6" y="106" width="1.2" height="1.2" fill="#9aa4b8"/><rect x="918.4" y="106.8" width="1" height="1" fill="#ffffff"/><rect x="1006.9" y="91.3" width="20.600000000000023" height="19.2" fill="#9dbfea" stroke="#3b78cc" stroke-width="1"/><rect x="1028.5" y="91.3" width="20.59999999999991" height="19.2" fill="#9dbfea" stroke="#3b78cc" stroke-width="1"/><rect x="1050.1" y="91.3" width="20.40000000000009" height="19.2" fill="#9dbfea" stroke="#3b78cc" stroke-width="1"/><rect x="1071.5" y="91.3" width="20" height="19.2" fill="#9dbfea" stroke="#3b78cc" stroke-width="1"/><rect x="1113.7" y="91.3" width="20.200000000000045" height="19.2" fill="#9dbfea" stroke="#3b78cc" stroke-width="1"/><rect x="1161.9" y="91.3" width="20.0" height="19.2" fill="#9dbfea" stroke="#3b78cc" stroke-width="1"/><circle cx="927.6" cy="105" r="2.5" fill="#f2f5fb" stroke="#1c1c1c" stroke-width="0.95"/><circle cx="933.2" cy="105.4" r="2.5" fill="#f2f5fb" stroke="#1c1c1c" stroke-width="0.95"/><path d="M926.2,103 Q928.4,98.6 931,98.2 M934.6,103.4 Q936,100.6 938.4,101.6" fill="none" stroke="#1c1c1c" stroke-width="0.85"/><circle cx="948.6" cy="105" r="2.5" fill="#f2f5fb" stroke="#1c1c1c" stroke-width="0.95"/><circle cx="954.2" cy="105.4" r="2.5" fill="#f2f5fb" stroke="#1c1c1c" stroke-width="0.95"/><path d="M947.2,103 Q949.4,98.6 952,98.2 M955.6,103.4 Q957,100.6 959.4,101.6" fill="none" stroke="#1c1c1c" stroke-width="0.85"/><circle cx="970.2" cy="105" r="2.5" fill="#f2f5fb" stroke="#1c1c1c" stroke-width="0.95"/><circle cx="975.8000000000001" cy="105.4" r="2.5" fill="#f2f5fb" stroke="#1c1c1c" stroke-width="0.95"/><path d="M968.8000000000001,103 Q971.0,98.6 973.6,98.2 M977.2,103.4 Q978.6,100.6 981.0,101.6" fill="none" stroke="#1c1c1c" stroke-width="0.85"/><circle cx="991.6" cy="105" r="2.5" fill="#f2f5fb" stroke="#1c1c1c" stroke-width="0.95"/><circle cx="997.2" cy="105.4" r="2.5" fill="#f2f5fb" stroke="#1c1c1c" stroke-width="0.95"/><path d="M990.2,103 Q992.4,98.6 995,98.2 M998.6,103.4 Q1000,100.6 1002.4,101.6" fill="none" stroke="#1c1c1c" stroke-width="0.85"/><circle cx="1013.2" cy="105" r="2.5" fill="#f2f5fb" stroke="#1c1c1c" stroke-width="0.95"/><circle cx="1018.8000000000001" cy="105.4" r="2.5" fill="#f2f5fb" stroke="#1c1c1c" stroke-width="0.95"/><path d="M1011.8000000000001,103 Q1014.0,98.6 1016.6,98.2 M1020.2,103.4 Q1021.6,100.6 1024.0,101.6" fill="none" stroke="#1c1c1c" stroke-width="0.85"/><circle cx="1056.6" cy="105" r="2.5" fill="#f2f5fb" stroke="#1c1c1c" stroke-width="0.95"/><circle cx="1062.2" cy="105.4" r="2.5" fill="#f2f5fb" stroke="#1c1c1c" stroke-width="0.95"/><path d="M1055.2,103 Q1057.4,98.6 1060,98.2 M1063.6,103.4 Q1065,100.6 1067.4,101.6" fill="none" stroke="#1c1c1c" stroke-width="0.85"/><circle cx="1077.6" cy="105" r="2.5" fill="#f2f5fb" stroke="#1c1c1c" stroke-width="0.95"/><circle cx="1083.2" cy="105.4" r="2.5" fill="#f2f5fb" stroke="#1c1c1c" stroke-width="0.95"/><path d="M1076.2,103 Q1078.4,98.6 1081,98.2 M1084.6,103.4 Q1086,100.6 1088.4,101.6" fill="none" stroke="#1c1c1c" stroke-width="0.85"/><circle cx="1098.6" cy="105" r="2.5" fill="#f2f5fb" stroke="#1c1c1c" stroke-width="0.95"/><circle cx="1104.2" cy="105.4" r="2.5" fill="#f2f5fb" stroke="#1c1c1c" stroke-width="0.95"/><path d="M1097.2,103 Q1099.4,98.6 1102,98.2 M1105.6,103.4 Q1107,100.6 1109.4,101.6" fill="none" stroke="#1c1c1c" stroke-width="0.85"/><circle cx="1119.6" cy="105" r="2.5" fill="#f2f5fb" stroke="#1c1c1c" stroke-width="0.95"/><circle cx="1125.2" cy="105.4" r="2.5" fill="#f2f5fb" stroke="#1c1c1c" stroke-width="0.95"/><path d="M1118.2,103 Q1120.4,98.6 1123,98.2 M1126.6,103.4 Q1128,100.6 1130.4,101.6" fill="none" stroke="#1c1c1c" stroke-width="0.85"/><circle cx="1146.6" cy="105" r="2.5" fill="#f2f5fb" stroke="#1c1c1c" stroke-width="0.95"/><circle cx="1152.2" cy="105.4" r="2.5" fill="#f2f5fb" stroke="#1c1c1c" stroke-width="0.95"/><path d="M1145.2,103 Q1147.4,98.6 1150,98.2 M1153.6,103.4 Q1155,100.6 1157.4,101.6" fill="none" stroke="#1c1c1c" stroke-width="0.85"/><circle cx="1168.1999999999998" cy="105" r="2.5" fill="#111" stroke="#1c1c1c" stroke-width="0.95"/><circle cx="1173.8" cy="105.4" r="2.5" fill="#111" stroke="#1c1c1c" stroke-width="0.95"/><path d="M1166.8,103 Q1169.0,98.6 1171.6,98.2 M1175.1999999999998,103.4 Q1176.6,100.6 1179.0,101.6" fill="none" stroke="#1c1c1c" stroke-width="0.85"/><rect x="930.6" y="94.4" width="9" height="3.2" fill="#2d6fd0"/><path d="M932,94.4 l0,-1.4 M934.4,94.4 l0,-1.4 M936.8,94.4 l0,-1.4" stroke="#2d6fd0" stroke-width="0.9"/><path d="M955.6,93.4 L955.6,98.4" stroke="#7fa6e0" stroke-width="1.6"/><path d="M953.6,97 L957.6,97 L955.6,99.6 Z" fill="#7fa6e0"/><rect x="971.4" y="93.2" width="9" height="2.4" fill="#2d6fd0"/><path d="M976,95.4 L976,99" stroke="#111" stroke-width="1.2"/><path d="M974.2,97.6 L977.8,97.6 L976,100 Z" fill="#111"/><rect x="992.6" y="93.4" width="1.8" height="5" fill="#e2b628"/><circle cx="998.4" cy="95.8" r="2.4" fill="#fff" stroke="#444" stroke-width="0.9"/><rect x="1001.8" y="93.4" width="1.8" height="5" fill="#e2b628"/><path d="M1014,97 Q1016,94.6 1018.4,95.4" fill="none" stroke="#4a7ad0" stroke-width="0.8" stroke-dasharray="1.2 1"/><rect x="1031.4" y="100.4" width="10.4" height="2.4" fill="#2d7fd8"/><path d="M1034.4,100.2 L1036.6,97.6 L1038.8,100.2" fill="none" stroke="#2d7fd8" stroke-width="1"/><text x="1061.6" y="98.6" font-family="Liberation Sans, sans-serif" font-size="6.6" font-weight="700" fill="#b03a8a">10</text><text x="1085.4" y="99" font-family="Liberation Sans, sans-serif" font-size="7.4" font-weight="700" fill="#2a3a9a">a</text><text x="1105.2" y="99" font-family="Liberation Sans, sans-serif" font-size="7.4" font-weight="700" fill="#2a3a9a">a</text><path d="M1097,99.6 L1099,96.2 L1103,96.2 L1104.6,99.6 Z" fill="#2d6fc0"/><rect x="1100" y="94.2" width="2.4" height="2.2" fill="#2d4f9a"/><path d="M1119.4,100 L1122,96 L1130.6,96 L1132.6,99.4 L1126,101.4 Z" fill="#2d7fd0"/><rect x="1125" y="93" width="2.6" height="3.2" fill="#2d5fb0"/><rect x="1137.6" y="92.5" width="1" height="17.0" fill="#c3c9d6"/><rect x="1138.6" y="92.5" width="1" height="17.0" fill="#f6f8fc"/><rect x="1147.4" y="96.6" width="10.6" height="3.6" fill="#2d7fd0"/><path d="M1147.4,94.2 L1158,94.2 M1147.4,92.8 L1147.4,96.6 M1158,92.8 L1158,96.6" stroke="#111" stroke-width="0.9"/><rect x="1169" y="96.6" width="10.6" height="3.6" fill="#2d7fd0"/><path d="M1169,94.2 L1179.6,94.2 M1169,92.8 L1169,96.6 M1179.6,92.8 L1179.6,96.6" stroke="#111" stroke-width="0.9"/><rect x="1185.8" y="92.5" width="1" height="17.0" fill="#c3c9d6"/><rect x="1186.8" y="92.5" width="1" height="17.0" fill="#f6f8fc"/><path d="M1191.6,93.6 L1200,93.6 L1203.8,97.4 L1203.8,107.6 L1191.6,107.6 Z" fill="#f3f5fb" stroke="#8d95a8" stroke-width="0.9"/><path d="M1195.2,95.4 L1195.2,104 M1195.2,104 L1192.8,106.2" fill="none" stroke="#2f9a2f" stroke-width="1.5"/><circle cx="1200.6" cy="103.4" r="3" fill="#dde2ee" stroke="#aab2c4" stroke-width="0.8"/><path d="M1213.6,90.4 L1220.3999999999999,90.4 Q1224.3999999999999,90.4 1224.3999999999999,94.4 L1224.3999999999999,107.80000000000001 Q1224.3999999999999,111.80000000000001 1220.3999999999999,111.80000000000001 L1213.6,111.80000000000001 Z" fill="#dce1ed" stroke="#ccd3e2" stroke-width="0.6"/><rect x="1216.9" y="103.20000000000002" width="5.2" height="1.3" fill="#1a1a1a"/><path d="M1216.7,105.80000000000001 L1222.3,105.80000000000001 L1219.5,108.80000000000001 Z" fill="#1a1a1a"/><rect x="1231" y="94" width="1.2" height="1.2" fill="#9aa4b8"/><rect x="1231.8" y="94.8" width="1" height="1" fill="#ffffff"/><rect x="1231" y="97" width="1.2" height="1.2" fill="#9aa4b8"/><rect x="1231.8" y="97.8" width="1" height="1" fill="#ffffff"/><rect x="1231" y="100" width="1.2" height="1.2" fill="#9aa4b8"/><rect x="1231.8" y="100.8" width="1" height="1" fill="#ffffff"/><rect x="1231" y="103" width="1.2" height="1.2" fill="#9aa4b8"/><rect x="1231.8" y="103.8" width="1" height="1" fill="#ffffff"/><rect x="1231" y="106" width="1.2" height="1.2" fill="#9aa4b8"/><rect x="1231.8" y="106.8" width="1" height="1" fill="#ffffff"/><rect x="1238.4" y="99" width="11" height="8.4" fill="#f6f7fb" stroke="#444" stroke-width="1.1"/><path d="M1238.4,102 L1249.4,102 M1243.8,99 L1243.8,107.4" stroke="#777" stroke-width="0.8"/><path d="M1243.6,95.4 L1247,92.6 L1252,93.6 L1251.6,98.4 L1246.4,98.6 Z" fill="#e8b838" stroke="#8a6a1a" stroke-width="0.7"/><rect x="1259" y="97.8" width="5.4" height="3.6" fill="#2f5fc0"/><rect x="1267.4" y="93.8" width="5.4" height="3.4" fill="#2f5fc0"/><rect x="1267.4" y="98.6" width="5.4" height="3.4" fill="#2f5fc0"/><rect x="1267.4" y="103.4" width="5.4" height="3.4" fill="#2f5fc0"/><path d="M1264.4,99.6 L1266,99.6 M1266,95.4 L1266,105.2 M1266,95.4 L1267.4,95.4 M1266,100.2 L1267.4,100.2 M1266,105.2 L1267.4,105.2" stroke="#1f3f8a" stroke-width="0.9" fill="none"/><rect x="1279.6" y="92.5" width="1" height="17.0" fill="#c3c9d6"/><rect x="1280.6" y="92.5" width="1" height="17.0" fill="#f6f8fc"/><path d="M1288.8,107.2 L1300,94.4" stroke="#333" stroke-width="1.1"/><ellipse cx="1294.4" cy="100.8" rx="2" ry="1.6" fill="#b8a4e0" stroke="#5a4a9a" stroke-width="0.6"/><polygon points="1293.2,96.4 1291.7,97.3 1292.1,98.9 1290.5,98.5 1289.6,100.0 1288.7,98.5 1287.1,98.9 1287.5,97.3 1286.0,96.4 1287.5,95.5 1287.1,93.9 1288.7,94.3 1289.6,92.8 1290.5,94.3 1292.1,93.9 1291.7,95.5" fill="#efd060" stroke="#9a7a1a" stroke-width="0.6"/><path d="M1306.8,106.6 L1319,94.6" stroke="#c3c9d7" stroke-width="1.1"/><ellipse cx="1311.4" cy="102.2" rx="2.6" ry="1.6" transform="rotate(-45 1311.4 102.2)" fill="#cdd3e0"/><path d="M1316,99.4 l3,0 l-1,-1.2" fill="none" stroke="#c3c9d7" stroke-width="0.9"/><polygon points="1335.0,96.2 1333.5,97.0 1334.0,98.6 1332.4,98.1 1331.6,99.6 1330.8,98.1 1329.2,98.6 1329.7,97.0 1328.2,96.2 1329.7,95.4 1329.2,93.8 1330.8,94.3 1331.6,92.8 1332.4,94.3 1334.0,93.8 1333.5,95.4" fill="#dde2ec" stroke="#c3c9d7" stroke-width="0.6"/><path d="M1330,107 L1342,94.4" stroke="#c8cedb" stroke-width="1.1"/><ellipse cx="1338.4" cy="98" rx="2" ry="1.4" transform="rotate(-45 1338.4 98)" fill="#d3d8e4"/><ellipse cx="1333.4" cy="103.4" rx="2" ry="1.4" transform="rotate(-45 1333.4 103.4)" fill="#d3d8e4"/><path d="M1350,107 L1350,104 L1354,104 L1354,98 L1360.4,98 L1360.4,104 L1364.4,104 L1364.4,107 L1357.6,107 L1357.6,101 L1356.8,101 L1356.8,107 Z" fill="#2478d0" stroke="#1a5aa6" stroke-width="0.5"/><polygon points="1357.2,95.8 1355.7,96.7 1356.1,98.3 1354.5,97.9 1353.6,99.4 1352.7,97.9 1351.1,98.3 1351.5,96.7 1350.0,95.8 1351.5,94.9 1351.1,93.3 1352.7,93.7 1353.6,92.2 1354.5,93.7 1356.1,93.3 1355.7,94.9" fill="#efd060" stroke="#9a7a1a" stroke-width="0.6"/><circle cx="1378" cy="99" r="4" fill="#e2e6ef" stroke="#c0c7d6" stroke-width="1"/><path d="M1372,101.6 Q1372,105.6 1375,106.4 M1384,101.6 Q1384,105.6 1381,106.4" fill="none" stroke="#c0c7d6" stroke-width="1.2"/><path d="M1398.2,94 L1398.2,106.8 L1392.6,106.8 Z M1400.4,94 L1400.4,106.8 L1406,106.8 Z" fill="#d3d8e4" stroke="#bfc6d5" stroke-width="0.7"/><circle cx="1415.6" cy="99.4" r="2.4" fill="#8fb4ea" stroke="#5a86cc" stroke-width="0.6"/><circle cx="1426" cy="99.4" r="2.4" fill="#8fb4ea" stroke="#5a86cc" stroke-width="0.6"/><text x="1418.6" y="98.4" font-family="Liberation Sans, sans-serif" font-size="7" font-weight="700" fill="#222">?</text><path d="M1415,105.4 L1426.6,105.4" stroke="#111" stroke-width="1.1" stroke-dasharray="2 1.2"/><path d="M1415.2,103 L1415.2,106.4 M1426.4,103 L1426.4,106.4" stroke="#111" stroke-width="0.8"/><path d="M1435,106.2 L1449,106.2" stroke="#2478d0" stroke-width="2.2"/><path d="M1436,105.4 L1446.4,95.4" stroke="#2478d0" stroke-width="2"/><path d="M1442.6,99.4 L1446.4,104.6" stroke="#333" stroke-width="1"/><text x="1445.4" y="98" font-family="Liberation Sans, sans-serif" font-size="6.4" font-weight="700" fill="#222">?</text><rect x="1455.8" y="92.5" width="1" height="17.0" fill="#c3c9d6"/><rect x="1456.8" y="92.5" width="1" height="17.0" fill="#f6f8fc"/><rect x="1461.6" y="95.4" width="8" height="8" fill="#e6c75a" stroke="#3a6a2a" stroke-width="0.9"/><rect x="1464.8" y="100" width="8" height="7.4" fill="#e6c75a" stroke="#2f8a2f" stroke-width="1.1"/><circle cx="1465.4" cy="94.6" r="1.8" fill="#a9c8ee" stroke="#5a86cc" stroke-width="0.5"/><circle cx="1469" cy="100.6" r="2" fill="#a9c8ee" stroke="#5a86cc" stroke-width="0.5"/><path d="M1476.2,93.6 L1476.2,98.8 L1472.6,98.8 L1472.6,100 L1470.2,96.2 L1472.6,92.4 L1472.6,93.6 Z" fill="#1a22a8"/><rect x="1483.4" y="95.6" width="8" height="7.6" fill="#e6e9f1" stroke="#bfc6d5" stroke-width="0.9"/><rect x="1486.6" y="100" width="8" height="7.4" fill="#e9ecf3" stroke="#bfc6d5" stroke-width="0.9"/><path d="M1497.4,93.6 L1497.4,98.4 L1494,98.4 L1494,99.6 L1491.6,96 L1494,92.4 L1494,93.6 Z" fill="#c5cad7"/><rect x="1505" y="95.4" width="9.4" height="11" fill="#dfe4ee" stroke="#333" stroke-width="1"/><rect x="1510.4" y="101.4" width="6.6" height="6" fill="#bfe6b8" stroke="#5a9a4a" stroke-width="0.7"/><path d="M1507,104.6 L1512.4,97.4" stroke="#6a8ac8" stroke-width="1"/><path d="M1519,93.2 L1519,98.4 L1515.4,98.4 L1515.4,99.6 L1513,95.8 L1515.4,92 L1515.4,93.2 Z" fill="#1a22a8"/><rect x="1525.2" y="92.5" width="1" height="17.0" fill="#c3c9d6"/><rect x="1526.2" y="92.5" width="1" height="17.0" fill="#f6f8fc"/><path d="M1531.6,94.4 L1544.6,107 M1544,94.4 L1532,106.8" stroke="#d42a2a" stroke-width="1.7" stroke-linecap="round"/><path d="M1551.1000000000001,99.19999999999999 L1555.7,99.19999999999999 L1553.4,102.0 Z" fill="#111"/><path d="M1564.6,90.4 L1570.3999999999999,90.4 Q1574.3999999999999,90.4 1574.3999999999999,94.4 L1574.3999999999999,107.80000000000001 Q1574.3999999999999,111.80000000000001 1570.3999999999999,111.80000000000001 L1564.6,111.80000000000001 Z" fill="#dce1ed" stroke="#ccd3e2" stroke-width="0.6"/><rect x="1567.4" y="103.20000000000002" width="5.2" height="1.3" fill="#1a1a1a"/><path d="M1567.2,105.80000000000001 L1572.8,105.80000000000001 L1570.0,108.80000000000001 Z" fill="#1a1a1a"/></svg>
<svg style="left:1738px;top:112px" width="40" height="560" viewBox="1738 112 40 560"><rect x="1743.4" y="118.8" width="1.2" height="1.2" fill="#9aa4b8"/><rect x="1744.2" y="119.6" width="1" height="1" fill="#fff"/><rect x="1746.4" y="118.8" width="1.2" height="1.2" fill="#9aa4b8"/><rect x="1747.2" y="119.6" width="1" height="1" fill="#fff"/><rect x="1749.4" y="118.8" width="1.2" height="1.2" fill="#9aa4b8"/><rect x="1750.2" y="119.6" width="1" height="1" fill="#fff"/><rect x="1752.4" y="118.8" width="1.2" height="1.2" fill="#9aa4b8"/><rect x="1753.2" y="119.6" width="1" height="1" fill="#fff"/><rect x="1755.4" y="118.8" width="1.2" height="1.2" fill="#9aa4b8"/><rect x="1756.2" y="119.6" width="1" height="1" fill="#fff"/><rect x="1758.4" y="118.8" width="1.2" height="1.2" fill="#9aa4b8"/><rect x="1759.2" y="119.6" width="1" height="1" fill="#fff"/><rect x="1761.4" y="118.8" width="1.2" height="1.2" fill="#9aa4b8"/><rect x="1762.2" y="119.6" width="1" height="1" fill="#fff"/><rect x="1764.4" y="118.8" width="1.2" height="1.2" fill="#9aa4b8"/><rect x="1765.2" y="119.6" width="1" height="1" fill="#fff"/><rect x="1767.4" y="118.8" width="1.2" height="1.2" fill="#9aa4b8"/><rect x="1768.2" y="119.6" width="1" height="1" fill="#fff"/><rect x="1743.8" y="130.4" width="15" height="7.2" rx="2.6" fill="#2a80d6" stroke="#16305a" stroke-width="1.1"/><path d="M1746,132.2 L1756.6,132.2" stroke="#7fb8f0" stroke-width="1"/><path d="M1764.0,132.4 L1768.8000000000002,132.4 L1766.4,135.20000000000002 Z" fill="#111"/><path d="M1745.4,159.2 Q1745.6,150 1757.6,149.8 L1757.6,154.6 Q1751,154.8 1750.8,159.2 Z" fill="#bcc3d3"/><path d="M1764.1000000000001,152.89999999999998 L1768.7,152.89999999999998 L1766.4,155.5 Z" fill="#bcc3d3"/><rect x="1744.4" y="174.6" width="14.4" height="4.4" fill="#bcc3d3"/><rect x="1749.6" y="168.8" width="4" height="6" fill="#bcc3d3"/><path d="M1764.1000000000001,173.1 L1768.7,173.1 L1766.4,175.70000000000002 Z" fill="#bcc3d3"/><path d="M1745.6,188.8 L1754.8,197 L1754.8,200.2 L1745.6,200.2 Z" fill="#bcc3d3"/><path d="M1764.1000000000001,193.29999999999998 L1768.7,193.29999999999998 L1766.4,195.9 Z" fill="#bcc3d3"/><path d="M1750.6,210.2 L1762,210.2 L1762,219.6 L1759.4,219.6 L1759.4,213 L1753.2,213 L1753.2,219.6 L1750.6,219.6 Z" fill="#bcc3d3"/><circle cx="1756.2" cy="216.4" r="2" fill="none" stroke="#bcc3d3" stroke-width="1"/><path d="M1754.6,230.8 Q1761,231 1761,236.4 Q1761,241.6 1754.6,241.8 Z" fill="#bcc3d3"/><path d="M1749.6,251.4 L1756.2,256.4 L1749.6,261.4 Z M1762.8,251.4 L1756.2,256.4 L1762.8,261.4 Z" fill="#bcc3d3"/><rect x="1749.6" y="273.6" width="13.2" height="6.2" fill="#bcc3d3"/><rect x="1753.4" y="270.6" width="1.6" height="12.4" fill="#bcc3d3"/><rect x="1757.6" y="270.6" width="1.6" height="12.4" fill="#bcc3d3"/><path d="M1752,271 L1760.6,282.6 M1760.6,271 L1752,282.6" stroke="#bcc3d3" stroke-width="1"/><path d="M1750,294.4 L1756,292.4 L1762.6,293.6 L1762.6,300.6 L1756,301.8 L1750,299.8 Z" fill="#bcc3d3"/><rect x="1742.6" y="310" width="28" height="1" fill="#c7cddb"/><rect x="1742.6" y="311" width="28" height="1" fill="#f4f6fb"/><path d="M1750,318.4 L1762,330 M1762,318.4 L1750,330" stroke="#bcc3d3" stroke-width="1.2"/><rect x="1749.4" y="337.4" width="13.6" height="2" fill="#bcc3d3"/><path d="M1756.2,339.4 L1752.6,346 L1759.8,346 Z" fill="none" stroke="#bcc3d3" stroke-width="1"/><path d="M1749.4,346.6 L1763,346.6" stroke="#bcc3d3" stroke-width="1"/><rect x="1749.4" y="359.4" width="13.6" height="2.2" fill="#bcc3d3"/><path d="M1750,364.4 L1763,364.4" stroke="#cfd5e2" stroke-width="1.2" stroke-dasharray="1.6 1"/><rect x="1749.4" y="378.2" width="13.6" height="2.2" fill="#bcc3d3"/><path d="M1751.4,383 L1762,383 M1751.4,386 L1762,386 M1751.4,389 L1762,389" stroke="#cfd5e2" stroke-width="1"/><rect x="1749.4" y="398.4" width="13.6" height="2" fill="#bcc3d3"/><path d="M1751.4,403 L1762,403 M1751.4,406 L1762,406" stroke="#cfd5e2" stroke-width="1"/><rect x="1749.4" y="408" width="13.6" height="1.6" fill="#bcc3d3"/><circle cx="1751.6" cy="424.4" r="3.6" fill="none" stroke="#bcc3d3" stroke-width="1.2"/><circle cx="1751.6" cy="424.4" r="1.4" fill="#bcc3d3"/><path d="M1751.6,418.4 L1751.6,430.4 M1745.6,424.4 L1757.6,424.4" stroke="#bcc3d3" stroke-width="0.9"/><path d="M1764.1000000000001,423.09999999999997 L1768.7,423.09999999999997 L1766.4,425.7 Z" fill="#bcc3d3"/><rect x="1749.4" y="445.4" width="13.6" height="2" fill="#bcc3d3"/><rect x="1755.4" y="441" width="1.6" height="4.6" fill="#bcc3d3"/><rect x="1744.4" y="468" width="14" height="2" fill="#bcc3d3"/><path d="M1751.4,462 L1751.4,468 M1749.4,464 L1751.4,461.6 L1753.4,464" fill="none" stroke="#bcc3d3" stroke-width="1"/><rect x="1744.4" y="471.2" width="14" height="1" fill="#cfd5e2"/><path d="M1764.1000000000001,464.09999999999997 L1768.7,464.09999999999997 L1766.4,466.7 Z" fill="#bcc3d3"/><text x="1748.6" y="489" font-family="Liberation Sans, sans-serif" font-size="8" fill="#bcc3d3">?</text><rect x="1753" y="484.6" width="10" height="2.4" fill="#bcc3d3"/><rect x="1757.2" y="481" width="1.6" height="10.6" fill="#bcc3d3"/><rect x="1749.4" y="505.4" width="13.6" height="2.2" fill="#bcc3d3"/><path d="M1753,499.6 L1753,504 M1759.4,499.6 L1759.4,504 M1753,501.8 L1759.4,501.8" stroke="#bcc3d3" stroke-width="1.1"/><rect x="1742.6" y="518.6" width="28" height="1" fill="#c7cddb"/><rect x="1742.6" y="519.6" width="28" height="1" fill="#f4f6fb"/><rect x="1750.6" y="525.6" width="12" height="12.6" rx="1.6" fill="none" stroke="#bcc3d3" stroke-width="1.3"/><rect x="1749" y="529.4" width="15.4" height="5.2" rx="1.4" fill="#bcc3d3"/><rect x="1744.4" y="548.6" width="15" height="6.6" rx="2.4" fill="#bcc3d3"/><rect x="1748.4" y="546.8" width="2" height="10.2" fill="#bcc3d3"/><rect x="1753.6" y="546.8" width="2" height="10.2" fill="#bcc3d3"/><path d="M1764.1000000000001,551.1 L1768.7,551.1 L1766.4,553.6999999999999 Z" fill="#bcc3d3"/><circle cx="1753.2" cy="572.6" r="4" fill="#bcc3d3"/><circle cx="1760" cy="572.6" r="4" fill="#bcc3d3"/><text x="1747.4" y="590.4" font-family="Liberation Sans, sans-serif" font-size="8" fill="#bcc3d3">?</text><rect x="1753.4" y="590" width="10" height="8" rx="2.4" fill="#bcc3d3"/><rect x="1742.6" y="606" width="28" height="1" fill="#c7cddb"/><rect x="1742.6" y="607" width="28" height="1" fill="#f4f6fb"/><path d="M1745.2,621.4 Q1745.4,613.2 1752.4,613 Q1759.4,613.2 1759.6,621.4 Z" fill="#f2ede4" stroke="#5a5048" stroke-width="1.1"/><path d="M1752.4,620.6 L1755.6,615.6" stroke="#c03a2a" stroke-width="1"/><rect x="1744.4" y="622" width="16" height="2.6" fill="#2a78d0"/><circle cx="1752.4" cy="623.4" r="1.6" fill="#8fc0f0" stroke="#1a4f9a" stroke-width="0.5"/><path d="M1764.0,617.0 L1768.8000000000002,617.0 L1766.4,619.8 Z" fill="#111"/><path d="M1747,638.4 L1763,638.4" stroke="#bcc3d3" stroke-width="1"/><path d="M1747.6,641 L1762.6,641" stroke="#bcc3d3" stroke-width="2.4" stroke-dasharray="1.6 0.9"/><path d="M1748,644.6 L1762,644.6" stroke="#cfd5e2" stroke-width="1" stroke-dasharray="1.2 1.4"/><path d="M1764,657.8 L1764,663.4" stroke="#111" stroke-width="1.1"/><path d="M1766,657.6 L1769,660.6 L1766,663.6 Z" fill="#111"/></svg>
<svg style="left:905px;top:112px" width="873" height="872" viewBox="905 112 873 872"><path d="M1110.4,121.4 L1114.8,121.4 M1111.4,121.4 L1111.4,126.6 M1113.8,121.4 L1113.8,126.6 M1113,121.4 L1113,126.6 M1109.4,126.8 L1115.8,126.8 M1112.6,126.8 L1112.6,130" stroke="#222" stroke-width="1" fill="none"/><path d="M1127.6,121.4 L1134.8,128.8 M1134.8,121.4 L1127.6,128.8" stroke="#555" stroke-width="1.1"/><path d="M1127.7,148.9 L1132.7,148.9 L1130.2,151.9 Z" fill="#111"/><rect x="920.6" y="165.8" width="3.4" height="3.4" fill="#fff" stroke="#445" stroke-width="0.7"/><rect x="920.6" y="174" width="3.4" height="3.4" fill="#fff" stroke="#445" stroke-width="0.7"/><rect x="921.9" y="167" width="1" height="1" fill="#111"/><rect x="921.9" y="175.2" width="1" height="1" fill="#111"/><path d="M926.4,167.4 L934,167.4 M926.4,175.6 L930,175.6" stroke="#7f9ccc" stroke-width="0.9" stroke-dasharray="1 1"/><text x="941" y="170.6" font-family="Liberation Sans, sans-serif" font-size="7.6" fill="#666">A</text><text x="941" y="178.8" font-family="Liberation Sans, sans-serif" font-size="7.6" fill="#666">Z</text><path d="M952.6,165.2 L952.6,176.4" stroke="#111" stroke-width="1.2"/><path d="M950.4,174.6 L954.8,174.6 L952.6,178.4 Z" fill="#111"/><path d="M1163.6,122.4 L1171.6,122.4 L1175.6,126.2 L1175.6,135 L1163.6,135 Z" fill="#fbfcff" stroke="#8a92a8" stroke-width="0.9"/><path d="M1171.6,122.4 L1171.6,126.2 L1175.6,126.2" fill="#dfe4f0" stroke="#8a92a8" stroke-width="0.7"/><path d="M1167.4,124.2 L1167.4,131.6 L1173.6,131.6 M1167.4,131.6 L1164.8,133.8" fill="none" stroke="#2f9a2f" stroke-width="1.4"/><path d="M1167.4,123.6 l-1.2,1.8 l2.4,0 Z M1174.2,131.6 l-1.8,-1.2 l0,2.4 Z" fill="#222"/><rect x="1279" y="123" width="11" height="11" rx="2.6" fill="#d96060" stroke="#b84848" stroke-width="0.8"/><rect x="1280" y="124" width="9" height="4.6" rx="2" fill="#e98a8a" opacity="0.8"/><path d="M1281.8,125.8 L1287.2,131.2 M1287.2,125.8 L1281.8,131.2" stroke="#fff" stroke-width="1.7" stroke-linecap="round"/><rect x="1721" y="124.6" width="6.4" height="1.4" fill="#111"/><path d="M1721,127.4 L1727.4,127.4 L1724.2,130.6 Z" fill="#111"/><path d="M1725,149.8 L1728.2,146.6 L1731.4,149.8" fill="none" stroke="#3a3a3a" stroke-width="1.6"/><path d="M1725,747.6 L1728.2,750.8 L1731.4,747.6" fill="none" stroke="#3a3a3a" stroke-width="1.6"/><path d="M1158.2,762.2 L1155,765.4 L1158.2,768.6" fill="none" stroke="#3a3a3a" stroke-width="1.6"/><path d="M1710.2,762.2 L1713.4,765.4 L1710.2,768.6" fill="none" stroke="#3a3a3a" stroke-width="1.6"/><path d="M1707.4,788.4 L1711.8,788.4 M1708.4,788.4 L1708.4,793.6 M1710.8,788.4 L1710.8,793.6 M1710,788.4 L1710,793.6 M1706.4,793.8 L1712.8,793.8 M1709.6,793.8 L1709.6,797" stroke="#222" stroke-width="1" fill="none"/><path d="M1725,788.4 L1732,795.6 M1732,788.4 L1725,795.6" stroke="#555" stroke-width="1.1"/><rect x="917.4" y="943.6" width="11.6" height="11.6" fill="#f0f3fa" stroke="#7a8296" stroke-width="0.9"/><rect x="917.4" y="943.6" width="3" height="11.6" fill="#c9d0e0"/><path d="M917.4,946.6 L929,946.6 M917.4,949.4 L929,949.4 M917.4,952.2 L929,952.2" stroke="#9aa2b6" stroke-width="0.7"/><rect x="1030" y="944.6" width="9" height="11" fill="#f6f3ea" stroke="#8a8478" stroke-width="0.9"/><rect x="1032.4" y="943.2" width="4.2" height="2.6" fill="#c9c2b0" stroke="#8a8478" stroke-width="0.6"/><path d="M1031.8,948.6 L1037,948.6 M1031.8,951 L1035,951" stroke="#9a9a9a" stroke-width="0.7"/><circle cx="1038.4" cy="953" r="3.6" fill="#e03a3a" stroke="#a82020" stroke-width="0.6"/><path d="M1036.8,951.4 L1040,954.6 M1040,951.4 L1036.8,954.6" stroke="#fff" stroke-width="1.1"/><path d="M1733.6,965.4 L1745,961.6 L1758.4,963 L1759.8,972.6 L1745.6,980.4 L1734.4,975.4 Z" fill="#59699a"/><text x="1737.2" y="973.8" font-family="Liberation Sans, sans-serif" font-size="8.2" font-weight="700" fill="#ffffff" textLength="18.6" lengthAdjust="spacingAndGlyphs">csd</text><rect x="1770.6" y="975.4" width="1.6" height="1.6" fill="#b9bfcc"/><rect x="1767.0" y="975.4" width="1.6" height="1.6" fill="#b9bfcc"/><rect x="1763.3999999999999" y="975.4" width="1.6" height="1.6" fill="#b9bfcc"/><rect x="1770.6" y="971.8" width="1.6" height="1.6" fill="#b9bfcc"/><rect x="1767.0" y="971.8" width="1.6" height="1.6" fill="#b9bfcc"/><rect x="1770.6" y="968.1999999999999" width="1.6" height="1.6" fill="#b9bfcc"/></svg>
<svg style="left:130px;top:268px" width="620" height="140" viewBox="130 268 620 140"><path d="M731,277.4 L739.4,284.8 M739.4,277.4 L731,284.8" stroke="#1a1a1a" stroke-width="1.6"/><path d="M476.7,321.79999999999995 L482.09999999999997,321.79999999999995 L479.4,325.0 Z" fill="#222"/><path d="M624.4,366.2 L627.8,369.6 L631.2,366.2" fill="none" stroke="#333" stroke-width="1.1"/><path d="M325.4,389.4 L328.8,392.8 L332.2,389.4" fill="none" stroke="#333" stroke-width="1.1"/><defs><linearGradient id="elb" x1="0" y1="0" x2="0" y2="1"><stop offset="0" stop-color="#7c7c7c"/><stop offset="0.3" stop-color="#929292"/><stop offset="0.7" stop-color="#5e5e5e"/><stop offset="1" stop-color="#444444"/></linearGradient></defs><path d="M147.4,322.4 Q149.4,313.4 160,311.6 Q176,308.6 191,311.4 Q202.6,314 203.6,321.6 Q204,331 196.6,334.4 Q190,331.4 175,330.6 Q163,331.2 156.6,337.6 Q147.6,333.6 147.4,322.4 Z" fill="url(#elb)"/><ellipse cx="154.4" cy="327.4" rx="6.6" ry="10" transform="rotate(-32 154.4 327.4)" fill="#6c6c6c"/><ellipse cx="198.4" cy="323" rx="5.4" ry="11" transform="rotate(18 198.4 323)" fill="#3e3e3e"/><path d="M163,314.6 Q176,311.8 189,314.4" fill="none" stroke="#a6a6a6" stroke-width="2.4" opacity="0.6"/><path d="M686,331.6 L686,346.4 L689.4,343.4 L691.8,348.8 L694,347.8 L691.6,342.6 L696.2,342.4 Z" fill="#ffffff" stroke="#222" stroke-width="1" stroke-linejoin="round"/></svg>
</div></body></html>
